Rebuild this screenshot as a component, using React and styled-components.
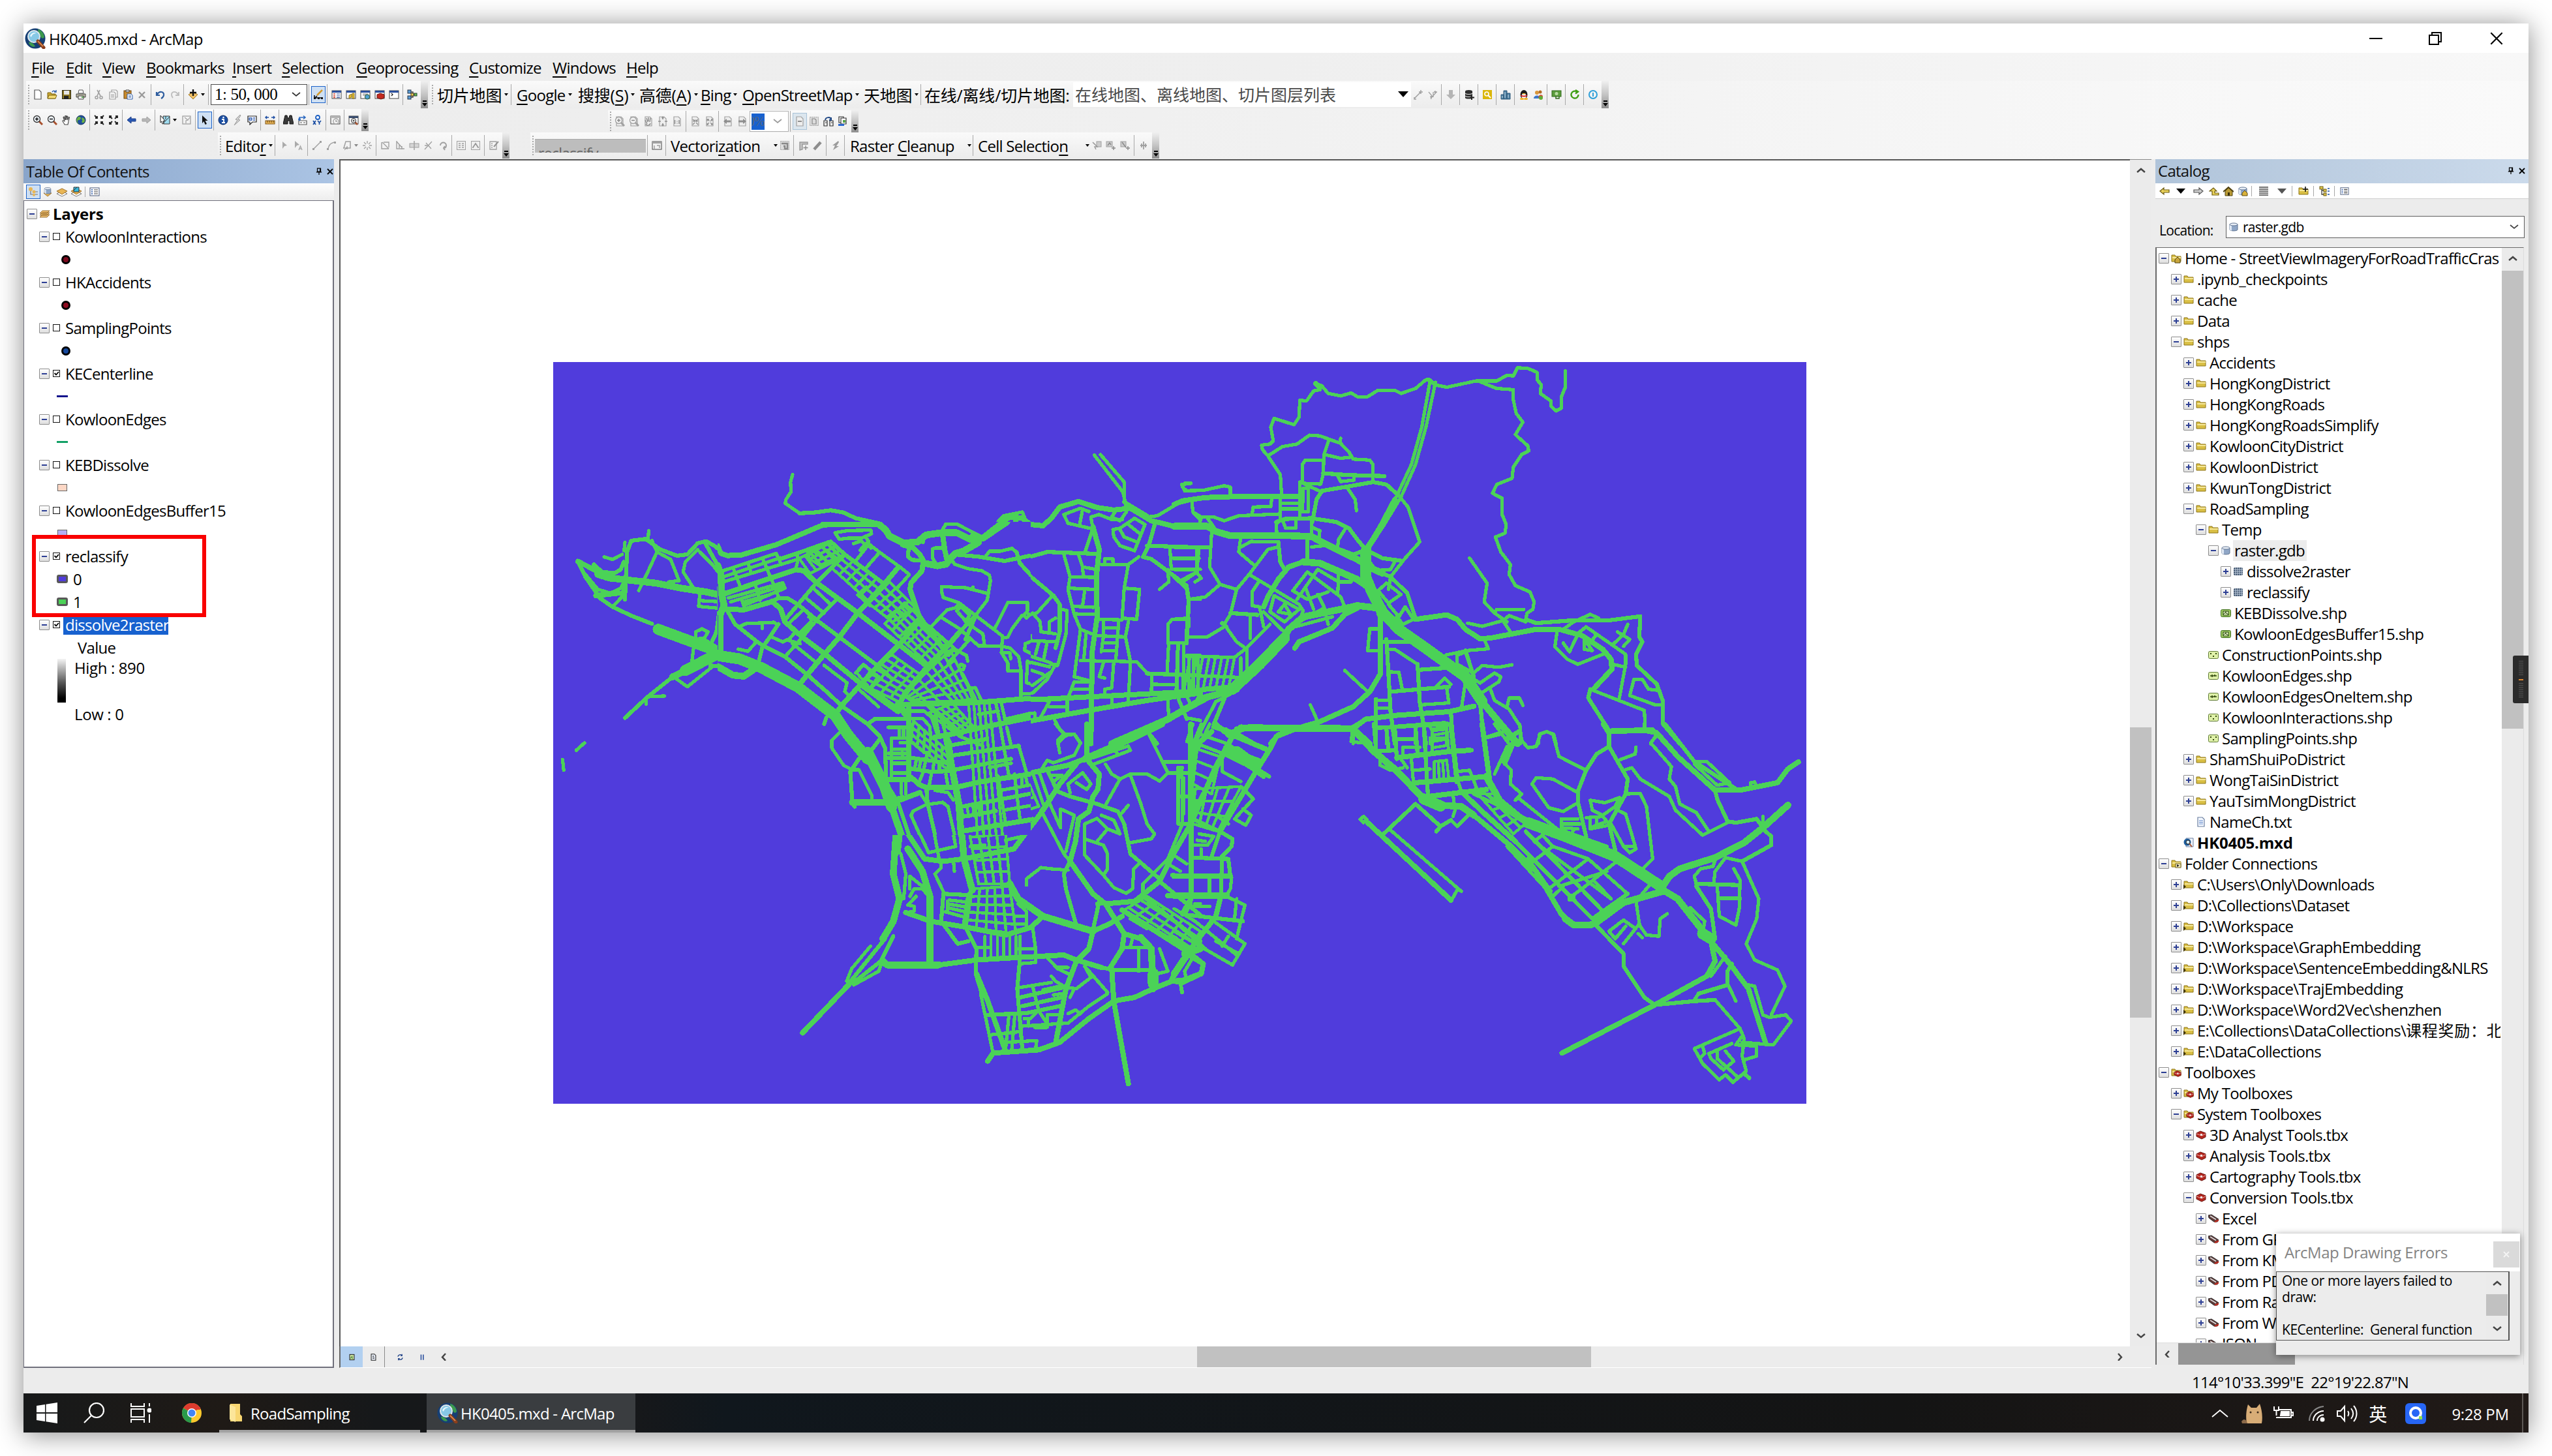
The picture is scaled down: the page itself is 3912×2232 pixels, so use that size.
import React from 'react';
import styled, { createGlobalStyle, css } from 'styled-components';

const GlobalStyle = createGlobalStyle`
  * { box-sizing: border-box; }
  body { margin: 0; background: #fff; }
  #root { width: 3912px; height: 2232px; overflow: hidden; }
`;

const sans = `"Open Sans", "Noto Sans CJK SC", sans-serif`;

/* ------------------------------------------------------------------ frame */

const Desktop = styled.div`
  width: 3912px;
  height: 2232px;
  padding: 36px;
  background: #fff;
  font-family: ${sans};
  font-size: 24px;
  letter-spacing: -0.03em;
  color: #000;
  white-space: nowrap;
`;

const Screen = styled.div`
  width: 3840px;
  height: 2160px;
  display: flex;
  flex-direction: column;
  background: #ececec;
  box-shadow: 0 3px 38px rgba(0, 0, 0, 0.46);
  position: relative;
`;

const TitleBar = styled.header`
  height: 45px;
  flex: none;
  background: #fff;
  display: flex;
  align-items: center;
  padding: 0 36px 0 2px;
`;

const TitleText = styled.span`
  margin-left: 5px;
  flex: 1;
  padding-top: 1px;
`;

const WindowButtons = styled.div`
  display: flex;
  gap: 71px;
  align-items: center;
`;

const MenuBar = styled.nav`
  height: 43px;
  flex: none;
  display: flex;
  align-items: center;
  padding-left: 12px;
  background: linear-gradient(90deg, #ececec, #efefef 50%, #f8f8f8);
`;

const MenuItem = styled.span`
  width: ${(p) => p.$w}px;
  padding-top: 1px;
  u { text-underline-offset: 4px; text-decoration-thickness: 2px; }
`;

/* --------------------------------------------------------------- toolbars */

const ToolbarArea = styled.div`
  height: 120px;
  flex: none;
  background: linear-gradient(90deg, #ececec, #f0f0f0 45%, #fafafa);
`;

const ToolbarRow = styled.div`
  display: flex;
  height: ${(p) => p.$h}px;
  padding-left: ${(p) => p.$left}px;
  align-items: flex-start;
`;

const Toolbar = styled.div`
  display: flex;
  align-items: center;
  height: ${(p) => p.$h}px;
  margin-right: ${(p) => p.$after || 0}px;
  margin-top: ${(p) => p.$top || 0}px;
  background: linear-gradient(180deg, #fafafa, #f1f1f1 60%, #ececec);
`;

const Grip = styled.i`
  width: 7px;
  height: 30px;
  flex: none;
  background: repeating-linear-gradient(180deg, #a9a9a9 0 2px, transparent 2px 4px) 3px 0 / 2px 100% no-repeat;
`;

const Sep = styled.i`
  width: 6px;
  height: 32px;
  flex: none;
  background: linear-gradient(#a8a8a8, #a8a8a8) 2px 0 / 1px 100% no-repeat;
`;

const IconCell = styled.span`
  width: ${(p) => p.$w || 22}px;
  height: 26px;
  flex: none;
  display: flex;
  align-items: center;
  justify-content: center;
  gap: 4px;
  ${(p) => p.$on && css`
    border: 1px solid ${p.$on === 'soft' ? '#a9c3d8' : '#1d63c9'};
    background: ${p.$on === 'soft' ? '#dce6ee' : '#cfe0f3'};
  `}
`;

const Caret = styled.i`
  width: 0;
  height: 0;
  flex: none;
  border: ${(p) => p.$s || 3}px solid transparent;
  border-top: ${(p) => (p.$s || 3) + 1}px solid ${(p) => p.$c || '#000'};
  border-bottom: 0;
`;

const Overflow = styled.i`
  width: 11px;
  height: 100%;
  margin-left: ${(p) => p.$gap ?? 2}px;
  flex: none;
  display: flex;
  flex-direction: column;
  align-items: center;
  justify-content: flex-end;
  gap: 2px;
  padding-bottom: 3px;
  background: linear-gradient(180deg, #f0f0f0, #c4c4c4 50%, #8e8e8e);
`;

const OverflowBar = styled.i`
  width: 6px;
  height: 2px;
  background: #000;
`;

const ToolLabel = styled.span`
  width: ${(p) => p.$w}px;
  flex: none;
  display: flex;
  align-items: center;
  justify-content: ${(p) => (p.$spread ? 'space-between' : 'flex-start')};
  gap: 4px;
  padding: 0 0 0 ${(p) => p.$pl || 0}px;
  font-size: ${(p) => (p.$cjk ? 25 : 24)}px;
  letter-spacing: ${(p) => (p.$cjk ? '-0.2px' : '-0.03em')};
  u { text-underline-offset: 4px; text-decoration-thickness: 2px; }
`;

const ScaleCombo = styled.div`
  width: 148px;
  height: 32px;
  flex: none;
  display: flex;
  align-items: center;
  justify-content: space-between;
  padding: 0 9px 0 5px;
  background: #fff;
  border: 1px solid #4b4b4b;
  font: 25px "Liberation Serif", serif;
  letter-spacing: -0.5px;
  b { font-weight: 400; letter-spacing: 5.5px; }
`;

const LayerCombo = styled.div`
  width: 518px;
  height: 38px;
  flex: none;
  display: flex;
  align-items: center;
  justify-content: space-between;
  padding: 0 4px 2px 3px;
  background: #fff;
  color: #4a4a4a;
  font-size: 25px;
  letter-spacing: 0;
`;

const PercentCombo = styled.div`
  width: 60px;
  height: 32px;
  flex: none;
  display: flex;
  align-items: center;
  justify-content: space-between;
  padding: 0 9px 0 2px;
  background: #fff;
  border: 1px solid #b3b3b3;
`;

const PercentText = styled.span`
  width: 20px;
  height: 25px;
  background: #1761cf;
  color: #55677f;
  font: 20px/25px "Liberation Serif", serif;
  overflow: hidden;
  display: flex;
  justify-content: flex-end;
`;

const RasterCombo = styled.div`
  width: 170px;
  height: 21px;
  flex: none;
  overflow: hidden;
  background: #bdbdbd;
  color: #666;
  display: flex;
  justify-content: space-between;
  padding: 0 8px 0 5px;
  font-size: 23px;
  line-height: 42px;
  border-top: 1px solid #a9a9a9;
`;

/* ------------------------------------------------------------------- body */

const Body = styled.main`
  height: 1853px;
  flex: none;
  display: flex;
`;

const DockHeader = styled.div`
  height: 37px;
  flex: none;
  display: flex;
  align-items: center;
  justify-content: space-between;
  padding: ${(p) => (p.$right ? '0 4px 2px 4px' : '2px 0 2px 4px')};
  background: ${(p) => (p.$right ? 'linear-gradient(90deg,#b0c4da,#cbdaeb)' : 'linear-gradient(90deg,#89a5ca,#abc4e4)')};
  color: #111;
`;

const DockButtons = styled.span`
  display: flex;
  gap: 6px;
`;

const TocDock = styled.aside`
  width: 476px;
  margin-right: 8px;
  flex: none;
  display: flex;
  flex-direction: column;
`;

const TocTools = styled.div`
  height: 26px;
  flex: none;
  display: flex;
  align-items: center;
  padding-left: 4px;
  background: linear-gradient(#fdfdfd, #ededed);
  & > span { height: 22px; }
  & > i { height: 16px; }
`;

const TocTree = styled.div`
  height: 1790px;
  border: 2px solid #70707c;
  border-left-width: 1px;
  border-top-width: 1px;
  background: #fff;
  padding: 2px 0 0 4px;
  position: relative;
`;

const TocRow = styled.div`
  height: 35px;
  display: flex;
  align-items: center;
  padding-left: ${(p) => p.$in || 0}px;
`;

const LayerName = styled.span`
  font-weight: ${(p) => (p.$bold ? 700 : 400)};
  letter-spacing: ${(p) => (p.$bold ? '-0.2px' : 'inherit')};
  margin-left: ${(p) => (p.$bold ? 2 : 5)}px;
  padding: 0 3px;
  height: 30px;
  line-height: 29px;
  ${(p) => p.$selected && css`
    background: #1761cf;
    color: #fff;
    width: 161px;
  `}
`;

const Expander = styled.i`
  width: 16px;
  height: 16px;
  flex: none;
  border: 1px solid #8c8c8c;
  border-radius: 1px;
  background:
    linear-gradient(#2d3f94, #2d3f94) center / 8px 2px no-repeat,
    ${(p) => (p.$plus ? 'linear-gradient(#2d3f94, #2d3f94) center / 2px 8px no-repeat,' : '')}
    linear-gradient(#fff, #dedede);
  visibility: ${(p) => (p.$hidden ? 'hidden' : 'visible')};
`;

const LayersIcon = styled.span`
  margin-left: 3px;
  display: flex;
`;

const CheckBox = styled.i`
  width: 11px;
  height: 11px;
  margin-left: 5px;
  flex: none;
  border: 1px solid #111;
  display: flex;
`;

const DotSymbol = styled.i`
  width: 14px;
  height: 14px;
  border-radius: 50%;
  border: 3px solid #000;
  background: ${(p) => p.$c};
`;

const LineSymbol = styled.i`
  width: 17px;
  height: 3px;
  background: ${(p) => p.$c};
`;

const Patch = styled.i`
  width: ${(p) => (p.$bold ? 17 : 15)}px;
  height: ${(p) => (p.$bold ? 13 : 11)}px;
  border: ${(p) => (p.$bold ? '3px solid #585858' : '1px solid #666')};
  border-radius: ${(p) => (p.$bold ? 3 : 0)}px;
  background: ${(p) => p.$c};
`;

const Ramp = styled.div`
  display: flex;
  height: 100px;
  padding-left: 47px;
  gap: 13px;
`;

const RampBar = styled.i`
  width: 13px;
  height: 67px;
  background: linear-gradient(#f4f4f4, #555 55%, #000 90%);
`;

const RampLabels = styled.div`
  display: flex;
  flex-direction: column;
  justify-content: space-between;
  line-height: 30px;
  margin-top: -1px;
  letter-spacing: -0.015em;
`;

const RedBox = styled.div`
  position: absolute;
  left: 12px;
  top: 512px;
  width: 267px;
  height: 126px;
  border: 6px solid #f90000;
`;

/* --------------------------------------------------------------- map view */

const MapColumn = styled.section`
  width: 2778px;
  margin-right: 6px;
  flex: none;
  display: flex;
  flex-direction: column;
`;

const MapRow = styled.div`
  height: 1820px;
  display: flex;
`;

const MapCanvas = styled.div`
  width: 2745px;
  flex: none;
  background: #fff;
  border-left: 2px solid #565656;
  border-top: 2px solid #565656;
  padding: 309px 0 0 326px;
  & > svg { display: block; }
`;

const VScroll = styled.div`
  width: ${(p) => p.$w}px;
  flex: none;
  display: flex;
  flex-direction: column;
  align-items: center;
  background: #ebebeb;
  border-top: ${(p) => (p.$edge ? '1px solid #8a8a8a' : '0')};
`;

const ThumbV = styled.i`
  width: 100%;
  height: ${(p) => p.$h}px;
  margin: ${(p) => p.$mt || 0}px 0 auto;
  flex: none;
  background: #c1c1c1;
`;

const ArrowSlot = styled.span`
  width: 33px;
  height: 33px;
  flex: none;
  display: flex;
  align-items: center;
  justify-content: center;
`;

const MapFooter = styled.div`
  height: 33px;
  display: flex;
  align-items: center;
  border-left: 2px solid #666;
  border-bottom: 1px solid #fff;
  background: #ececec;
`;

const ViewButton = styled.span`
  width: 34px;
  height: 32px;
  flex: none;
  display: flex;
  align-items: center;
  justify-content: center;
  margin-left: ${(p) => p.$ml || 0}px;
  background: ${(p) => (p.$on ? '#b2d0f0' : 'transparent')};
  border-right: ${(p) => (p.$line ? '1px solid #8a8a8a' : '0')};
`;

const HTrack = styled.div`
  flex: 1;
  height: 32px;
  padding-left: 1138px;
`;

const ThumbH = styled.i`
  display: block;
  width: ${(p) => p.$w}px;
  height: 100%;
  background: ${(p) => p.$c || '#c1c1c1'};
`;

/* ---------------------------------------------------------------- catalog */

const CatalogDock = styled.aside`
  width: 572px;
  flex: none;
  display: flex;
  flex-direction: column;
  position: relative;
`;

const CatalogTools = styled.div`
  height: 24px;
  flex: none;
  display: flex;
  align-items: center;
  padding-left: 3px;
  background: #fff;
  border-bottom: 1px solid #cfcfcf;
  & > i { height: 16px; }
`;

const LocationRow = styled.div`
  height: 74px;
  flex: none;
  display: flex;
  padding: 26px 6px 0;
  font-size: 21px;
`;

const LocationLabel = styled.span`
  width: 102px;
  padding-top: 7px;
  line-height: 30px;
`;

const LocationCombo = styled.div`
  width: 458px;
  height: 34px;
  display: flex;
  align-items: center;
  gap: 6px;
  padding: 0 8px 0 3px;
  border: 1px solid #5e5e5e;
  background: #fff;
  & > span { flex: 1; }
`;

const CatalogBox = styled.div`
  width: 565px;
  height: 1713px;
  border-left: 2px solid #6a6a6a;
  border-top: 1px solid #6a6a6a;
  border-right: 1px solid #ddd;
  background: #fff;
  display: flex;
  flex-direction: column;
`;

const CatalogScroller = styled.div`
  height: 1679px;
  flex: none;
  display: flex;
`;

const CatalogTree = styled.div`
  width: 527px;
  margin-right: 2px;
  height: 1679px;
  overflow: hidden;
  padding: 0 0 0 3px;
  border-bottom: 1px solid #ddd;
`;

const CatRow = styled.div`
  height: 32px;
  display: flex;
  align-items: center;
  gap: 3px;
  padding-left: ${(p) => p.$lv * 19}px;
`;

const CatName = styled.span`
  padding: 2px 3px 0 2px;
  height: 32px;
  line-height: 28px;
  font-weight: ${(p) => (p.$bold ? 700 : 400)};
  letter-spacing: ${(p) => (p.$bold ? '-0.2px' : 'inherit')};
  background: ${(p) => (p.$hot ? '#ececec' : 'transparent')};
`;

const Hanzi = styled.span`
  letter-spacing: 0.7px;
`;

const CatalogHScroll = styled.div`
  height: 33px;
  display: flex;
  background: #ebebeb;
`;

const SideTab = styled.div`
  position: absolute;
  right: 0;
  top: 761px;
  width: 24px;
  height: 73px;
  border-radius: 3px 0 0 3px;
  background: #2b2b2b;
  display: flex;
  flex-direction: column;
  justify-content: center;
  align-items: center;
`;

const TabLine = styled.i`
  width: 7px;
  height: ${(p) => (p.$hot ? 2 : 24)}px;
  margin: 2px 0;
  background: ${(p) => (p.$hot ? '#e0862f' : 'repeating-linear-gradient(#555 0 1px, #2b2b2b 1px 3px)')};
`;

const ErrorPopup = styled.div`
  position: absolute;
  left: 185px;
  top: 1647px;
  width: 374px;
  height: 186px;
  background: #ececec;
  box-shadow: 0 2px 10px rgba(0, 0, 0, 0.45);
`;

const ErrorTitle = styled.div`
  height: 58px;
  padding: 12px 1px 6px 13px;
  display: flex;
  justify-content: space-between;
  align-items: center;
  background: #fff;
  color: #848484;
  letter-spacing: -0.02em;
  line-height: 30px;
  & > span:first-child { margin-top: -7px; }
`;

const ErrorClose = styled.span`
  width: 40px;
  height: 40px;
  display: flex;
  align-items: center;
  justify-content: center;
  background: #dadada;
`;

const ErrorBox = styled.div`
  width: 358px;
  height: 106px;
  display: flex;
  border: 1px solid #555;
  border-right-width: 2px;
  padding: 1px 2px 1px 8px;
  font-size: 21px;
  line-height: 25px;
  letter-spacing: -0.022em;
`;

const ErrorText = styled.div`
  width: 313px;
  flex: none;
  white-space: pre;
`;

const StatusBar = styled.footer`
  height: 39px;
  flex: none;
  padding: 4px 0 0 3324px;
  line-height: 36px;
  white-space: pre;
  background: #ececec;
`;

/* ---------------------------------------------------------------- taskbar */

const Taskbar = styled.div`
  height: 60px;
  flex: none;
  display: flex;
  color: #fff;
  background: linear-gradient(90deg, #17191a, #1f1a16 8%, #16181a 14%, #17181a 24%, #10171d 28%, #141414 75%, #211a17);
`;

const TaskIcon = styled.span`
  width: ${(p) => p.$w}px;
  display: flex;
  align-items: center;
  justify-content: center;
`;

const TaskButton = styled.div`
  width: ${(p) => p.$w}px;
  margin-right: 10px;
  display: flex;
  align-items: center;
  gap: ${(p) => p.$gap}px;
  padding: 4px 0 0 ${(p) => p.$pl}px;
  border-bottom: 4px solid #a2a2a2;
  background: ${(p) => (p.$active ? '#3a3d40' : 'transparent')};
`;

const Tray = styled.div`
  margin-left: auto;
  display: flex;
  align-items: center;
  height: 60px;
`;

const TrayCell = styled.span`
  width: ${(p) => p.$w}px;
  padding-top: 2px;
  display: flex;
  justify-content: center;
  align-items: center;
  font-size: ${(p) => (p.$big ? 28 : 24)}px;
  letter-spacing: -0.015em;
`;

const ShowDesktop = styled.i`
  width: 10px;
  height: 60px;
  border-left: 2px solid #5d5855;
`;

/* ------------------------------------------------------------------ icons */

const G = '#a0a0a0';
const L = (d, c = '#222', w = 1.5, f = 'none') => <path d={d} stroke={c} strokeWidth={w} fill={f} />;
const page = (c = '#555', f = '#fff') => L('M3 1h7l3 3v11H3z', c, 1.2, f);
const win = (c = '#2b4f9c', f = '#fff') => (
  <g><rect x="1" y="2" width="14" height="12" fill={f} stroke="#444" /><rect x="1" y="2" width="14" height="3" fill={c} /></g>
);
const lens = (c, f, sign) => (
  <g>{L('M9.5 9.5L15 15', c === G ? G : '#a8512e', 3)}<circle cx="6.5" cy="6.5" r="5" fill={f} stroke={c} strokeWidth="1.3" />{L(sign, c === G ? '#888' : '#111', 1.5)}</g>
);
const folder = (c = '#d9bf45') => (
  <g><path d="M1 3h5l1 2h8v8H1z" fill={c} stroke="#8d7416" strokeWidth="1" /><path d="M2 7h13" stroke="#fff6b8" strokeWidth="1.5" /></g>
);
const toolbox = (
  <g><path d="M1 5l6-3 8 3v6l-6 3-8-4z" fill="#b3261e" stroke="#6b1712" /><path d="M1 6l8 3 6-3" stroke="#f3b2aa" fill="none" /><path d="M7 6h3v3H7z" fill="#efefef" /></g>
);
const cyl = (
  <g><path d="M2 4v8c0 2.5 12 2.5 12 0V4" fill="#8fa6c6" stroke="#5f7390" /><path d="M2 4v8c0 1 2 1.5 3 1.7V4z" fill="#dfe8f4" /><ellipse cx="8" cy="4" rx="6" ry="2" fill="#e9eff7" stroke="#5f7390" /></g>
);
const poly = (
  <g><rect x=".5" y="2.5" width="15" height="11" rx="2" fill="#9fca63" stroke="#3c6b1d" /><rect x="4" y="5" width="8" height="6" fill="#dff0bd" stroke="#24420f" />{L('M4 10l3-3 5 3M8 5v3', '#24420f', 1)}</g>
);
const layerIcon = (f = '#e9b655') => (
  <g><path d="M0 11l8 4 8-4-8-4z" fill="#fff" stroke="#777" /><path d="M0 7l8 5 8-5-8-4z" fill={f} stroke="#a0722a" /></g>
);

const ICONS = {
  new: page(),
  open: <g><path d="M1 5h5l1 2h6v7H1z" fill="#c9a52f" stroke="#7d6412" /><path d="M3 9h12l-2 5H1z" fill="#f5dc74" stroke="#7d6412" />{L('M8 4c2-3 4-2 5 0M11 4h3V1', '#2456a5', 1.4)}</g>,
  save: <g><rect x="1.5" y="1.5" width="13" height="13" fill="#8a7420" stroke="#2e2a12" /><rect x="4" y="2" width="8" height="6" fill="#e6e6e6" /><rect x="4" y="10" width="7" height="5" fill="#222" /></g>,
  print: <g><path d="M5 1h6l1 5H4z" fill="#fff" stroke="#555" /><path d="M1 7h14v5H1z" fill="#b9b6a4" stroke="#444" /><path d="M4 10h8v5H4z" fill="#eee" stroke="#444" />{L('M9 12h3', '#3a9c2d', 1.5)}</g>,
  cut: <g>{L('M5 1l5 9M9 1L5 10', G, 1.6)}<circle cx="4" cy="12.5" r="2" fill="none" stroke={G} strokeWidth="1.5" /><circle cx="11" cy="12.5" r="2" fill="none" stroke={G} strokeWidth="1.5" /></g>,
  copy: <g>{L('M5 1h7l2 2v9H5z', G, 1.2, '#f6f6f6')}{L('M2 4h7l2 2v9H2z', G, 1.2, '#f6f6f6')}{L('M4 8h5M4 10h5M4 12h5', G, 1)}</g>,
  paste: <g><rect x="2" y="2" width="11" height="12" fill="#c98b2c" stroke="#6e4611" /><path d="M5 1h5v3H5z" fill="#ddd" stroke="#444" /><path d="M7 7h6l2 2v6H7z" fill="#fff" stroke="#2a5aa8" />{L('M9 10h4M9 12h4', '#2a5aa8', 1)}</g>,
  del: L('M3 4l9 9M12 4l-9 9', '#9a9a9a', 2.4),
  undo: L('M2 4v5h5M3 8c3-6 11-5 10 1-.4 2-2 4-4 5', '#2d5c9e', 2.2),
  redo: L('M14 4v5H9M13 8C10 2 3 3 3 8c0 2 1 4 2 5', '#bcbcbc', 1.8),
  add: <g><path d="M8 15L1 8l7-4 7 4z" fill="#efc067" stroke="#a37a26" />{L('M8 0v10M3 5h10', '#111', 2.4)}</g>,
  edit: <g>{L('M2 13h11M2 9v4M6 10l-3 3', '#111', 1.6)}{L('M6 9L14 1', '#d49a2a', 2.5)}<path d="M1 12h3v3H1zM7 12h3v3H7zM12 12h3v3h-3z" fill="#111" /></g>,
  toc: <g>{win()}{L('M3 7h3M3 10h3M3 12.5h3', '#cf3c2b', 1.5)}{L('M8 7h5M8 10h5M8 12.5h5', '#2b4f9c', 1.2)}</g>,
  catalog: <g>{win()}<path d="M5 9l4-2v5l-4 2zM10 6h3v8h-3z" fill="#e5bd2f" stroke="#7d6412" strokeWidth=".8" /></g>,
  search: <g>{win()}{L('M4 7h8M4 9h6', '#777', 1)}<circle cx="11" cy="11.5" r="3.6" fill="#4f9fd1" stroke="#29592a" /></g>,
  toolbox: <g>{win()}<path d="M4 8l5-2 6 2v5l-5 2-6-2z" fill="#c42a20" stroke="#6b1712" /></g>,
  python: <g>{win('#2b4f9c')}{L('M4 6l2 2-2 2', '#111', 1.2)}</g>,
  model: <g>{L('M4 4h5v8H4M9 8h4', '#444', 1.4)}<rect x="1" y="1" width="5" height="5" fill="#5b9bd5" stroke="#234" /><rect x="1" y="10" width="5" height="5" fill="#5b9bd5" stroke="#234" /><rect x="6" y="6" width="4" height="4" fill="#f3d44e" stroke="#432" /><rect x="11" y="6" width="4" height="4" fill="#66b84a" stroke="#243" /></g>,
  zin: lens('#333', '#eef4fa', 'M4 6.5h5M6.5 4v5'),
  zout: lens('#333', '#eef4fa', 'M4 6.5h5'),
  hand: L('M5 15c-1-3-4-5-3-6s2 1 3 1L3 4l1-1 2 5V1.500h1.300V8l1.200-6 1.200.3L9.300 8l2.200-4.500 1 .5-1.500 5.500c0 3-1 4-1 5.500z', '#444', 1.1, '#fff'),
  globe: <g><circle cx="8" cy="8" r="7" fill="#1f4f9e" stroke="#14305e" /><path d="M4 3c4 0 5 2 3 4s-3 0-4 2 2 4 1 5c-3-3-4-7 0-11zM10 4c3 1 4 3 4 5s-2 4-4 3 1-3 0-4-1-2 0-4z" fill="#6cb344" /></g>,
  fin: L('M1 1l4 4M5 2v3H2M15 1l-4 4M11 2v3h3M1 15l4-4M2 11h3v3M15 15l-4-4M14 11h-3v3', '#222', 1.8),
  fout: L('M2 2l4 4M2 5V2h3M14 2l-4 4M14 5V2h-3M2 14l4-4M2 11v3h3M14 14l-4-4M14 11v3h-3', '#222', 1.8),
  back: L('M1 8l6-5v3h7v4H7v3z', '#1a3c88', 1, '#2958b4'),
  fwd: L('M15 8L9 3v3H2v4h7v3z', '#9d9d9d', 1, '#b8b8b8'),
  selfeat: <g><path d="M5 2h10v12H6z" fill="#9fdcf0" stroke="#333" />{L('M6 12L15 3M9 2v5', '#333', 1)}<path d="M1 1l7 8-3 .500 1 4-2 .500-1-4-2 2z" fill="#fff" stroke="#222" /></g>,
  clear: <g><rect x="2" y="2" width="12" height="12" fill="none" stroke={G} strokeWidth="1.300" />{L('M5 4l5 4-3 1v4M10 8l3-4', G, 1.2)}</g>,
  arrow: <path d="M4 1l8.500 8H8.500l2.500 5-2.500 1-2-5-2.500 3z" fill="#111" />,
  info: <g><circle cx="8" cy="8" r="7" fill="#1c4fa3" stroke="#0c2e6b" />{L('M6 7h3v5M6 12h5', '#fff', 1.8)}<circle cx="8.500" cy="4" r="1.300" fill="#fff" /></g>,
  bolt: <path d="M12 0L5 7l3 1-5 8 9-8-3-1 4-6z" fill="#d4d4d4" stroke="#999" />,
  html: <g>{L('M2 2h13v9H9l-4 4v-4H2z', '#222', 1.2, '#fff')}{L('M4 5h4v3H4zM10 5h3M10 8h3', '#2b57ad', 1.3)}</g>,
  measure: <g>{L('M1 4h5M10 4h5M3 2L1 4l2 2M13 2l2 2-2 2', '#1d4da3', 1.5)}<rect x="1" y="9" width="14" height="5" fill="#edb95b" stroke="#7c5312" />{L('M4 9v3M7 9v3M10 9v3M13 9v3', '#5a3b07', 1)}</g>,
  find: <path d="M3 1h3l1 4h2l1-4h3l3 13h-6V9H7v5H0z" fill="#3b3b3b" stroke="#111" />,
  route: <g>{L('M2 9h12v6H2zM4 12h3M9 12h3', '#555', 1.2, '#fff')}{L('M3 7V4h8M9 1.500L12 4 9 6.500', '#2b68c0', 1.6)}<circle cx="3" cy="7" r="2" fill="#2b68c0" /></g>,
  xy: <g><circle cx="9" cy="4" r="3" fill="#fff" stroke="#1c5fc1" strokeWidth="1.800" />{L('M2 9l4 6M6 9l-4 6M9 9l2.500 3L14 9M11.500 12v3', '#1c4fa3', 1.7)}</g>,
  time: <g>{win('#b5b5b5', '#f2f2f2')}<circle cx="9" cy="10" r="4" fill="#f4f4f4" stroke={G} strokeWidth="1.300" />{L('M9 8v2h2', G)}</g>,
  viewer: <g>{win('#3a4d6e')}{L('M10 11l4 4', '#a8512e', 2.5)}<circle cx="8" cy="9" r="3.500" fill="#fff" stroke="#222" />{L('M6.500 9h3M8 7.500v3', '#222', 1)}</g>,
  lzin: <g>{page(G, '#eee')}{lens(G, '#f3f3f3', 'M4 6.500h5M6.500 4v5')}</g>,
  lzout: <g>{page(G, '#eee')}{lens(G, '#f3f3f3', 'M4 6.500h5')}</g>,
  lhand: <g>{page(G, '#eee')}{L('M3 6l3 6M5 3l2 6M8 2v6M11 3l-1 6M4 12c1 3 6 3 7-1', '#8e8e8e', 1.5)}</g>,
  lfull: <g>{page(G, '#eee')}{L('M8 1v4M8 11v4M1 8h4M11 8h4M6.500 3L8 1.500 9.500 3M6.500 13L8 14.500 9.500 13', '#8e8e8e', 1.6)}</g>,
  l11: <g>{page(G, '#eee')}{L('M4.500 6v6M8 7.500v1M8 10.500v1M11 6v6', '#8e8e8e', 1.5)}</g>,
  lfin: <g>{page(G, '#eee')}{L('M4 5l3 3M7 5.500V8H4.500M12 5L9 8M9 5.500V8h2.500M4 13l3-3M12 13l-3-3', '#8e8e8e', 1.4)}</g>,
  lfout: <g>{page(G, '#eee')}{L('M4.500 5.500l3 2M4 7.500V5h3M12 5L9 8M4 13l3-3M12 13l-3-3M10 5h2v2M4 11v2h2M12 11v2h-2', '#8e8e8e', 1.4)}</g>,
  lback: <g>{page(G, '#eee')}<path d="M1 8l5-4v2.500h6v3H6V12z" fill="#8e8e8e" /></g>,
  lfwd: <g>{page(G, '#eee')}<path d="M14 8L9 4v2.500H2v3h7V12z" fill="#8e8e8e" /></g>,
  ldraft: <g>{page(G, '#eee')}{L('M5 8h6', '#777', 1.6)}</g>,
  lfocus: <g><rect x="1.500" y="1.500" width="13" height="13" fill="#ddd" stroke={G} strokeDasharray="2 1" />{L('M5 4h4l2 2v6H5z', '#888', 1.2)}</g>,
  lswap: <g>{L('M1 7h5v8H1zM10 7h5v8h-5zM3 10h2M12 10h2', '#333', 1.2, '#eee')}{L('M3 6c1-5 8-5 9-1M12 2v4H9', '#1d4684', 2)}</g>,
  lpages: <g>{L('M2 1h7v9H2z', '#333', 1.200, '#fff')}{L('M5 3h8v9H5z', '#333', 1.200, '#fff')}<rect x="8" y="6" width="4" height="4" fill="#5aa54b" />{L('M1 13.500h9', '#2b68d0', 3)}</g>,
  eptr: <path d="M5 2l7 6-4 1-3 4z" fill="#aaa" />,
  eptra: <g><path d="M2 1l7 6-4 1-3 4z" fill="#aaa" />{L('M8 15l2.500-6L13 15M9 13h3', '#aaa', 1.4)}</g>,
  eline: <g>{L('M3 13L13 3', G)}<path d="M1 12h3v3H1zM12 1h3v3h-3z" fill={G} /></g>,
  ecurve: <g>{L('M3 13c1-6 4-9 10-10', G)}<path d="M1 12h3v3H1zM12 2h3v3h-3z" fill={G} /></g>,
  etrace: <g>{L('M4 12L7 2h7v10H3', G)}{L('M5 15l4-4M9 14V9', '#888', 1)}</g>,
  epoint: L('M8 1v4M8 11v4M1 8h4M11 8h4M3 3l3 3M13 3l-3 3M3 13l3-3M13 13l-3-3', G, 1.300),
  evert: <g>{L('M2 3v10h11M3 3l10 10M5 3h8v8', G, 1.400)}</g>,
  eshape: L('M3 1v12h12M3 2l8 9M7 6v6M11 9v5', G, 1.4),
  esplit: <g><rect x="1" y="5" width="14" height="6" fill="#d5d5d5" stroke={G} />{L('M8 1v14', G)}</g>,
  ecut: L('M2 14L13 2M4 4l8 9M2 8h4', G, 1.300),
  erot: L('M4 8c0-6 9-6 9 0 0 3-2 4-4 4M11 9l-2 3 2 3', '#a0a0a0', 2),
  etable: <g><rect x="1.500" y="1.500" width="13" height="13" fill="#efefef" stroke={G} />{L('M4 5h3M4 8h3M4 11h3M9 5h3M9 8h3M9 11h3', G, 1.400)}</g>,
  esketch: <g><rect x="1.500" y="1.500" width="13" height="13" fill="#efefef" stroke={G} />{L('M4 11l4-6 4 6M4 12v-2M12 12v-2', '#949494', 1.600)}</g>,
  ecreate: <g>{L('M2 2h10v12H2zM4 5h2M4 8h2M4 11h2', G, 1.300)}{L('M8 10l7-8', '#949494', 2)}</g>,
  rtable: <g>{win(G, '#f2f2f2')}{L('M8 8h4v4M4 8v5', G)}</g>,
  vtrace: <g><rect x="1.500" y="1.500" width="13" height="13" fill="#ddd" stroke={G} strokeDasharray="2 1" />{L('M3 5h9v8H8V9H6', '#888', 2.400)}</g>,
  vcorner: <g>{L('M3 15V3h12v3H7v8z', '#999', 1.4, '#c4c4c4')}{L('M12 8v7M8.500 11.500h7', '#888', 1.300)}</g>,
  vpen: L('M3 14L13 3', '#8d8d8d', 4.500),
  vflash: <path d="M12 1L3 8h4l-3 7 9-6h-4l4-6z" fill="#9b9b9b" />,
  cs1: <g><rect x="8" y="2" width="7" height="8" fill="#ccc" stroke={G} />{L('M2 3l7 7H5l2 4', '#999', 1.500)}</g>,
  cs2: <g><rect x="1" y="2" width="9" height="8" fill="#ccc" stroke={G} />{L('M12 9v6M9 12h6M3 8l3-4 2 3', '#888', 1.400)}</g>,
  cs3: <g><rect x="1" y="2" width="8" height="8" fill="#ccc" stroke={G} />{L('M3 3l6 8M12 9v6M9 12h6', '#888', 1.400)}</g>,
  snap: L('M8 2v12M3 8h10M5 5v6M11 5v6', '#a0a0a0', 1.800),
  gline: L('M2 14L12 4M12 1v6M9 4h6M2 12v3h3', G, 1.500),
  gsel: L('M2 4l6 7H5l1 4M9 4v8M6 13l8-9M12 2v4M10 4h5', G, 1.300),
  gdown: <path d="M5 1h6v7h4l-7 7-7-7h4z" fill="#b5b5b5" />,
  db: <g><path d="M2 3v10c0 2 11 2 11 0V3" fill="#2c2c2c" /><ellipse cx="7.500" cy="3" rx="5.500" ry="2" fill="#2c2c2c" />{L('M2 6c1 2 10 2 11 0M2 10c1 2 10 2 11 0', '#fff', 1)}{L('M12 9v7M9 12.500h7', '#222', 2)}</g>,
  yzoom: <g><rect x="1" y="1" width="14" height="14" fill="#dbb70b" /><circle cx="7" cy="7" r="3" fill="none" stroke="#fff" strokeWidth="1.600" />{L('M9 9l4 4', '#fff', 2)}</g>,
  city: <g><path d="M1 8h4v7H1zM5 2h5v13H5zM10 6h5v9h-5z" fill="#4c7ea0" stroke="#2e5a7a" />{L('M7 4v9M12 8v5M3 10v3', '#cfe3ef', 1)}</g>,
  qq: <g><ellipse cx="8" cy="8" rx="5.500" ry="7" fill="#1b1b1b" /><ellipse cx="8" cy="10.500" rx="3.500" ry="4" fill="#fff" /><path d="M3 8c3 2 7 2 10 0v2c-3 2-7 2-10 0z" fill="#d32020" /><path d="M5 6h6l-3 2z" fill="#f0b020" /><ellipse cx="5" cy="14.500" rx="3" ry="1.500" fill="#f0b020" /><ellipse cx="11" cy="14.500" rx="3" ry="1.500" fill="#f0b020" /></g>,
  users: <g><circle cx="6" cy="5" r="3" fill="#d9963a" /><path d="M1 14c0-6 10-6 10 0z" fill="#3a77c9" /><circle cx="11" cy="4" r="2.500" fill="#b36b24" /><path d="M8 13c0-6 7-6 7-2v3z" fill="#d34a32" /><circle cx="12" cy="13" r="3" fill="#5fae35" /></g>,
  money: <g><rect x="1" y="2" width="14" height="9" fill="#5b9c3c" stroke="#33691e" /><circle cx="8" cy="6.500" r="2.500" fill="#b9dba3" />{L('M7 11v3h5v-3', '#33691e')}</g>,
  refresh: L('M11 3.500A5.500 5.500 0 1 0 13.500 8M9 1l4 2.500-4 3', '#3f9e14', 2.400),
  about: <g><circle cx="8" cy="8" r="6" fill="none" stroke="#2d9fd8" strokeWidth="2" />{L('M8 5v6', '#2d9fd8', 2)}</g>,
  tocorder: <g>{L('M4 5v7h5M10 12h5M11 8h4', '#777', 1.200)}<circle cx="4" cy="4" r="3" fill="#e9b655" /><circle cx="9" cy="8" r="2.500" fill="#e9b655" /><circle cx="9" cy="13" r="2" fill="#e9b655" /></g>,
  tocsource: <g><path d="M2 10l6 5 6-5z" fill="#e9b655" stroke="#a0722a" /><g transform="translate(1.600 0) scale(.8)">{cyl}</g></g>,
  tocvis: layerIcon(),
  tocsel: <g>{layerIcon()}<path d="M4 1h8v7H4z" fill="#35b8dc" stroke="#333" />{L('M4 6l5-5', '#333', 1)}</g>,
  options: <g><rect x="1" y="2" width="14" height="12" fill="#fff" stroke="#48597a" />{L('M7 5h6M7 8h6M7 11h6', '#444', 1.200)}{L('M3 5h2M3 8h2M3 11h2', '#1d4da3', 1.600)}</g>,
  cback: L('M1 8l6-5v3h8v4H7v3z', '#6b5a10', 1.2, '#ead25a'),
  cfwd: L('M15 8L9 3v3H1v4h8v3z', '#555', 1.2, '#ccc'),
  cup: L('M1 8l6-5 5 5H9v3h6v3H5V8z', '#6b5a10', 1.2, '#ead25a'),
  chome: <g><path d="M3 8v7h11V8L8 3z" fill="#b99a35" stroke="#4f4212" />{L('M0 9l8-7 8 7', '#4f4212', 2)}<path d="M7 10h3v5H7z" fill="#3b3009" /></g>,
  cdefault: <g>{cyl}<path d="M7 15v-4l4-4 4 4v4z" fill="#d9b23a" stroke="#5e4a11" /></g>,
  cgrid: L('M1 2h14M1 5h14M1 8h14M1 11h14M1 14h14', '#444', 1.400),
  cconnect: <g>{folder()}{L('M11 1v8M7 5h8', '#111', 1.600)}</g>,
  ctree: <g>{L('M4 4v9h5M4 7h5', '#444', 1.300)}<rect x="1" y="1" width="5" height="4" fill="#e2c94f" stroke="#6b5a10" /><rect x="7" y="5" width="4" height="4" fill="#e2c94f" stroke="#6b5a10" /><rect x="7" y="11" width="4" height="4" fill="#e2c94f" stroke="#6b5a10" />{L('M13 4h3M13 8h3M13 13h3', '#1d4da3', 1.500)}</g>,
  folder: folder(),
  home: <g>{folder()}<path d="M6 15v-5l4-4 4 4v5z" fill="#c8a53d" stroke="#4f4212" /></g>,
  fconn: <g>{folder()}<rect x="7" y="8" width="8" height="6" fill="#f7f1ca" stroke="#6b5a10" /><path d="M9 9l4 2-4 2z" fill="#222" /></g>,
  flink: <g>{folder()}<path d="M0 8l4 3-4 4z" fill="#3d330a" /></g>,
  ftool: <g>{folder()}<g transform="translate(4 4) scale(.75)">{toolbox}</g></g>,
  tbx: toolbox,
  toolset: <g><path d="M0 3l5-1 11 7-2 4-5 0L1 7z" fill="#5e3a38" stroke="#2c2c2c" />{L('M3 4l9 5.500', '#ddd', 1.500)}{L('M10 13l6-2.500', '#c32b20', 2.200)}</g>,
  gdb: cyl,
  raster: <g><rect x="1" y="2" width="14" height="12" rx="2" fill="#2f4560" />{L('M1 5h14M1 8h14M1 11h14M4 2v12M7 2v12M10 2v12M13 2v12', '#c7d3e2', 1)}</g>,
  poly,
  point: <g><rect x=".5" y="2.500" width="15" height="11" rx="2" fill="#def0a8" stroke="#5f7a35" /><path d="M3 5h2v2H3zM7 9h2v2H7zM11 5h2v2h-2z" fill="#33480f" /></g>,
  line: <g><rect x=".5" y="2.500" width="15" height="11" rx="2" fill="#def0a8" stroke="#5f7a35" />{L('M3 8h10M6 6v4M10 6v3', '#33480f', 1.500)}</g>,
  txt: <g>{page('#6b7fa0', '#f4f8ff')}{L('M5 6h6M5 8.500h6M5 11h6', '#5e86c7', 1.200)}</g>,
  mxd: <g><path d="M4 1h11v13H4z" fill="#eef3fa" stroke="#6b7fa0" /><circle cx="6" cy="7" r="5.500" fill="#1f5f9e" /><circle cx="7" cy="7" r="3" fill="#d3ebf7" stroke="#222" />{L('M9 9l4 5', '#a8512e', 2)}</g>,
  layers: <g><path d="M1 13l4-4h11l-4 4zM1 10l4-4h11l-4 4zM1 7l4-4h11l-4 4z" fill="#f0c274" stroke="#8d6321" strokeWidth=".9" /></g>,
  vdata: <g><rect x="3" y="2" width="10" height="12" fill="#cfe4a3" stroke="#222" strokeWidth="1.500" />{L('M5 11l4-6M9 8v4', '#3b7a2d', 1.600)}</g>,
  vlayout: <g><path d="M3 1h7l3 3v11H3z" fill="#e8eef8" stroke="#222" strokeWidth="1.500" />{L('M6 6h3M6 10h4', '#222', 2)}</g>,
  vrefresh: L('M3 7c0-5 8-6 9-2M12 1v4H9M13 9c0 5-8 6-9 2M4 15v-4h3', '#1d3f85', 1.800),
  vpause: L('M5 2v12M10 2v12', '#22489a', 2.200),
};

const IconSvg = styled.svg`
  flex: none;
`;

const Icon = ({ name, size = 16 }) => (
  <IconSvg width={size} height={size} viewBox="0 0 16 16">{ICONS[name]}</IconSvg>
);

const ArcMapLogo = ({ size = 32 }) => (
  <IconSvg width={size} height={size} viewBox="0 0 32 32">
    <circle cx="16" cy="16" r="15.500" fill="#163f74" />
    <path d="M20 2c6 1 10 7 10 12-2 3-5 2-6-2s-4-5-4-10zM6 22c3-1 8 2 10 6-4 2-9-1-10-6z" fill="#3c9a4e" />
    <circle cx="14" cy="13" r="9" fill="#86c8e6" stroke="#dfe7ec" strokeWidth="2" />
    <path d="M8 12c2-5 7-6 10-4-4 0-7 2-8 6z" fill="#e9f7fd" />
    <path d="M20 20l9 10" stroke="#8a3e1c" strokeWidth="5" strokeLinecap="round" />
    <path d="M20 20l8 8" stroke="#e39a5c" strokeWidth="1.500" />
  </IconSvg>
);

const Chevron = ({ dir = 'down', w = 14, c = '#444', s = 2.500 }) => {
  const d = { up: 'M1 8l6-5 6 5', down: 'M1 3l6 5 6-5', left: 'M9 1L4 6.500l5 5.500', right: 'M5 1l5 5.500L5 12' }[dir];
  return <svg width={w} height={w * 0.85} viewBox="0 0 14 12"><path d={d} fill="none" stroke={c} strokeWidth={s} /></svg>;
};

const Pin = () => (
  <svg width="10" height="12" viewBox="0 0 12 14"><path d="M3 1h6v6H3zM1 8h10M6 8v5M8 1v6" stroke="#000" strokeWidth="1.500" fill="none" /></svg>
);
const Cross = ({ c = '#000', s = 1.8, w = 12 }) => (
  <svg width={w} height={w} viewBox="0 0 12 12"><path d="M2 2l8 8M10 2l-8 8" stroke={c} strokeWidth={s} /></svg>
);

/* -------------------------------------------------------------------- map */

const lerp = (a, b, t) => [a[0] + (b[0] - a[0]) * t, a[1] + (b[1] - a[1]) * t];

// Street grid inside a quadrilateral: nu + 1 streets one way, nv + 1 the other.
const mesh = ([x0, y0, x1, y1, x2, y2, x3, y3, nu, nv]) => {
  const a = [x0, y0], b = [x1, y1], c = [x2, y2], d = [x3, y3];
  let out = '';
  for (let i = 0; i <= nu; i += 1) out += `M${lerp(a, b, i / nu)} ${lerp(d, c, i / nu)}`;
  for (let j = 0; j <= nv && nv > 0; j += 1) out += `M${lerp(a, d, j / nv)} ${lerp(b, c, j / nv)}`;
  return out;
};

const TILES = [
  {
    x: -8, y: -15,
    minor: 'M588,490 583,520 584,560 572,590 570,605 605,645 M242,715 241,745M85,880 120,950 150,965 175,945 185,910M135,820 155,830 178,810M185,762 183,795M185,910 178,980 155,1020M250,755 262,800 295,830 315,915 290,920M262,800 240,880 218,955M360,790 330,840 325,880 350,945M365,800 395,850 418,900M365,970 362,1018 425,1028M365,995 420,1000M415,1030 418,1190M240,1380 280,1377M235,1385 236,1410M310,1310 335,1340 395,1260M350,1185 345,1250M415,1190 370,1145 355,1150 355,1120 370,1108 385,1120 375,1148M1085,690 1095,655 1140,640 1150,680M1215,975 1210,980M1165,1045 1183,1080 1185,1120 1220,1128M1220,1065 1205,1080 1205,1125M1235,1030 1248,1035 1245,1130 1225,1255 1210,1250M1160,1135 1160,1155 1145,1180 1155,1215 1210,1245M1160,1155 1220,1160M1180,1160 1172,1210M1200,1160 1192,1225M1155,1235 1150,1335 1165,1335 1205,1285M1220,1250 1200,1310 1165,1365 1140,1370M1155,1240 1205,1260M1155,1270 1190,1290M1145,1050 1175,1045 1210,980M1145,1050 1150,1065 1165,1045M1095,655 1045,745M1313,412 1382,560 1390,620M1328,410 1385,520 1385,600M1240,650 1280,625 1300,638M1240,650 1250,685 1310,708M1285,630 1278,690M1365,635 1355,660 1375,675 1390,640M1310,708 1305,660 1325,650 1355,670 1380,670M1310,705 1292,795M1410,665 1435,690 1410,795 1375,775 1360,740 1358,710 1375,705 1410,665M1375,710 1385,740 1415,760M1395,690 1425,730M1420,820 1395,850 1385,945 1380,1065 1415,1070 1422,950 1385,945M1330,850H1395M1338,840V828H1358V840M1440,660 1465,655 1515,605 1568,585M1548,600 1550,640 1568,670M1568,552 1535,555 1525,540 1530,525 1545,525M1490,870 1492,920 1470,950M1530,915 1560,880M1495,785 1498,868 1568,870M1498,825 1565,825M1565,780 1560,870M1240,810 1255,900 1250,950 1265,1050 1280,1110 1310,1130M1275,810 1285,860 1318,870M1285,870 1288,900M1255,900 1318,902M1252,945 1315,950M1290,955 1285,1015M1265,1018 1312,1022M1268,1048 1316,1050M1320,1070 1380,1072M1315,1135 1385,1140M1372,1075 1365,1230M1335,1075V1130M1340,1105H1370M1335,1140 1330,1200M1335,1165h30M1330,1195h35M1395,1080 1388,1140 1400,1240 1395,1395M1280,1235 1415,1240 1440,1285M1280,1110 1270,1235 1265,1300 1300,1315M1293,1130 1288,1230M1265,1322h40M1260,1350h45M1265,1320 1250,1385M1335,1245 1325,1300 1338,1305M1360,1240 1355,1345 1338,1350 1338,1380M1452,1290 1450,1365M1452,1330 1512,1332M1490,1165h40M1492,1165 1488,1285M1515,1165 1512,1365M1535,1215H1568M1528,1165V1365M1541,1215V1365M1552,1215V1365M1563,1215V1365M1540,1065 1500,1070 1490,1090 1490,1165M1540,1140h28M1540,990H1568M1440,1515 1465,1568M1490,1390 1492,1465M1515,1385 1535,1465 1568,1475M1190,1390 1205,1400 1185,1460M1248,1385V1440M1205,1420H1248M1355,1380V1410M1395,1380V1400M1215,1465 1230,1510 1245,1535 1225,1568M1245,1535 1265,1530 1280,1568M1095,1465 1170,1445V1465M1540,1100 1540,1065',
    mid: 'M605,645 640,642 680,633 710,642 740,665 795,685M72,838 90,900 115,960 125,985 155,1020 200,1055 250,1088M110,850 130,880 160,885 175,870 182,840M185,990 190,800 200,755 235,748 270,790 310,815 335,810 360,765 380,757 400,775 425,810 465,812 540,780M380,770 400,830 415,880M415,880 415,1000 405,1120 390,1175M300,1300 240,1380 185,1465M390,1255 420,1260 460,1305 500,1285M1120,830 1140,828 1200,800 1325,808M1140,870 1215,975 1230,1010 1230,1120 1220,1185M1385,600 1440,655M1460,680 1445,770 1430,820 1450,828 1500,890 1535,935 1540,990 1535,1140M1440,775 1568,782M1440,1287 1568,1295',
    major: 'M540,780 670,690 790,688M1050,750 1085,690 1110,660 1140,665 1160,690 1190,695 1210,665 1230,620 1275,598 1320,622 1360,632 1400,625 1450,675 1500,695 1568,700M1120,1391 1190,1390 1250,1385 1400,1372 1568,1358M1150,1480 1200,1465 1300,1435 1440,1395 1568,1365M1310,700 1325,790 1318,900 1320,1060 1308,1200 1305,1568M72,838 110,870 140,905 190,912M1125,680V650M115,975 170,965',
    trunk: 'M120,890 150,905 190,912 260,925 320,945 380,960 420,975M1355,1568 1490,1470 1568,1395M415,1210 380,1235 300,1300M415,940V1025',
    huge: 'M265,1110 330,1150 420,1205M400,1215 330,1275',
    meshes: [],
  },
  {
    x: 952, y: -15,
    minor: 'M940,75 940,140 930,180 930,225 918,235 905,215 905,195 880,165 882,130 872,110 872,80 850,65 825,62 815,95 800,92 775,115 725,115 655,140 625,130 615,110 605,110 580,145 545,165 530,152 490,152 465,178 440,178 425,163 400,175 370,165 355,135 340,125 350,150 335,155 318,195 302,192 300,260 288,290 240,265 232,300 238,355 230,368 210,372 212,390 225,415 255,490 258,570M735,118 775,145 815,150 815,190 822,245 838,280 820,330 850,375 852,395 835,410 815,460 812,505 775,530 765,565 788,585 788,650 798,690 795,725 772,740 785,800 808,850 805,890 820,935 855,960 865,1000 862,1030 848,1045 845,1070M225,415 260,378 295,368 325,332 350,335 400,365 420,400 430,428 470,432 478,450 478,520M400,345 398,360M372,350 360,410 358,490 352,528 308,525 308,450 315,432 358,432M362,410 400,425 425,420M393,495 400,518 432,512 432,497M540,575 562,620 590,760 555,825 520,900 515,950M415,540 435,590 438,635M315,530 355,560M302,520V655M310,545H322V640H308zM135,575 135,540 120,535 70,553 25,555 18,530 40,525M42,590 45,640 65,660 95,660 120,675 155,655 255,648M235,580 232,618 190,620 187,650M255,580 255,670 245,690 247,735M255,605H300M255,627H300M262,680 268,705 292,705 292,675M412,705 395,750 393,775M65,665 60,690M80,665 95,700M330,680 330,740 348,740 350,715 330,700M330,780 360,775M470,790 470,840 485,875 520,870 530,840M490,955 510,925 545,970 515,1005zM515,1010 540,1060 555,1020 575,1070 550,1090 535,1060M160,740 155,800 190,850M160,780 185,758 245,760M250,780 225,790 180,890 150,950 135,1050 120,1090 150,1160 175,1190 175,1290M90,720 85,860 110,930 150,950M110,930 75,980 35,990M55,785 55,880 15,915M0,870h55M55,885 65,905 50,920M180,890 300,1010 310,1035M205,915 187,960 187,1015 205,1020 215,1100M183,1055V1145M35,1140 80,1140 120,1100M0,1070H35M240,975 300,1030 265,1080 230,1040zM265,1010 280,1050 250,1040zM215,1040 270,1130M320,880 285,955 320,990 370,960M345,870 295,990M320,880 400,980 410,1020M345,870 395,920H425M395,890 393,970M315,940 335,1030M345,970 360,1020 370,1090M290,1100 380,1060M300,1080 360,1025M310,1035 300,1080M230,1090 170,1190M30,1218 145,1222 170,1190M0,1292 150,1302M145,1360 100,1400 75,1480 50,1568M10,1390 30,1470M30,1380 40,1410M160,1225V1300M95,1500 125,1510M327,1412 345,1480M410,1275 465,1360M430,1508V1568M470,1108 465,1195H495M470,1108H490M510,1190 530,1190 585,1250M515,1280 540,1282 548,1350M655,1345 660,1405 595,1412M650,1305 630,1340M650,1305 665,1330M700,1320 690,1430M490,1395h30M490,1425h30M510,1505V1568M580,1500V1568M530,1550H580M615,1500 620,1515 650,1510M705,1085 740,1098 790,1075 805,1055 845,1080M745,1150 755,1188 705,1195 655,1212 640,1230M790,1075 808,1120M710,825 752,925 745,1000 770,1045 800,1080M770,1045 775,1030H840M705,1195 680,1215 680,1250 720,1285 740,1255 780,1262 812,1252M760,1350 770,1395 805,1430 832,1500 832,1568M800,1420 805,1385 830,1385 838,1415M700,1290 735,1325 770,1285 785,1300 780,1320 730,1375M935,1110 960,1080 1000,1050 1020,1065M920,1120 915,1180 945,1230 970,1250 1000,1230 1030,1210M970,1130 950,1200 935,1165M975,1120 990,1100 1085,1210 1085,1250 1070,1385M990,1160 1005,1195 985,1190 985,1155M1015,1130 1000,1165M1055,1250 1085,1262M1090,1090 1080,1130 1055,1170M1065,1120 1095,1150 1080,1178M1000,1350 1130,1435 1132,1505M1145,1568 1160,1530M1165,1355 1140,1350 1125,1310 1105,1310 1095,1375 1155,1412 1172,1412M875,1568 878,1530 895,1520 912,1530 918,1568M745,1545 790,1520M800,1545 830,1515M615,115 595,300 570,450 535,575 495,700 462,780M628,120 605,300 580,450 545,580 505,690 470,780M655,1485V1568M615,1568V1545H650',
    mid: 'M478,520 410,540 355,555 342,590 332,680M478,520 510,530 540,575M358,485 420,492 505,496M245,680 265,668 330,665 390,680 420,705 440,750 460,790 500,825 545,835M320,740V830M350,760 430,810 465,790M500,885 520,900 560,965 580,1065M250,760 255,840 265,870M0,780 85,782M0,825h55M0,900 30,945 35,1000 30,1165M135,1045 200,1052M510,1150 515,1290 520,1440 530,1568M485,1390V1568M520,1360 660,1340M590,1272 650,1265M585,1250 590,1400 600,1500 605,1568M735,1400 745,1568M665,1440 670,1568M490,1505 650,1485M845,1070 870,1085 950,1075 1040,1075 1120,1058 1118,1140 1125,1160 1110,1210 1112,1255 1160,1330 1175,1400 1175,1490 1215,1568M1000,1350 995,1385 1045,1515 1045,1568M1045,1515 1150,1510 1180,1568M125,1370 95,1490M100,1370 0,1460M700,1195 720,1300M115,1085 125,1100M430,1500 460,1470M505,1160H570M300,1505 250,1530 230,1568',
    major: 'M0,610 20,595 75,582 150,578 300,578M530,590 495,700 466,780M150,1520 180,1500 300,1505 430,1508M300,1505 350,1480 430,1420 470,1360 495,1290 495,1050M430,1508 460,1470 530,1455 660,1440 720,1418M580,1070 600,1065 655,1052 680,1070 700,1110 735,1148 760,1145 870,1110 930,1112 980,1135 1030,1190 1050,1230 1052,1270 1010,1345M0,1370 75,1350 150,1340M215,1020 225,980 250,910 275,860 310,840M440,1520 470,1568M95,1500 150,1530 190,1568M340,125 350,140M290,1185 300,1160 380,1105 410,1050 440,1025',
    trunk: 'M0,697 80,697 100,718 135,735 280,735 330,738 360,765 440,830 480,870 500,885M310,840 350,845 440,910 470,945 485,990 495,1050M265,1140 275,1110 310,1060 400,1030 440,1015 490,1025M740,1400 785,1490 825,1568M60,1390 150,1350M130,1530 150,1520',
    huge: 'M265,1145 205,1250 140,1350M460,800 460,900 475,960 500,1040 540,1110 600,1180 700,1300 740,1400',
    meshes: [[38, 1220, 145, 1222, 130, 1350, 24, 1350, 7, 0], [8, 1165, 24, 1165, 20, 1360, 4, 1360, 1, 0]],
  },
  {
    x: -8, y: 555,
    minor: 'M68,105 88,75M35,142 38,185M718,1030 730,980 775,890M735,1045 795,990 805,940M1150,190 1165,195M1205,310 1185,345M1180,190 1205,310M1165,195 1190,320M1220,0 1240,40 1225,65 1230,115M1240,40 1265,40 1280,75 1265,125 1215,155 1200,145 1185,185M1305,165 1400,105 1395,88 1310,135M1355,95 1370,120M1340,160 1355,200 1375,220 1340,325M1375,220 1400,200 1440,200 1470,228 1490,195 1440,25M1400,205 1425,320 1440,400 1458,440 1450,460 1400,475M1205,205H1235L1215,230M1250,240 1285,195 1305,240 1295,262 1270,235M1250,240 1255,275M1185,345 1240,520 1255,550M1205,315 1232,415 1232,340 1265,365 1245,510M1395,325 1375,365M1250,585 1210,580 1185,575 1150,620 1150,645M1290,460 1290,400 1320,378 1345,420 1320,470M1290,460 1335,485 1345,520 1345,580 1335,605 1290,525 1290,460M1335,605 1360,655 1390,678 1405,660 1408,580 1420,560M1330,365 1360,385 1375,440 1345,420M1165,815 1172,900 1172,955 1135,960M1130,900H1170M860,755 880,750 880,730 865,725 885,690M915,690 900,660 880,660 870,690M945,550 945,575 930,600 950,670M975,555 977,590M965,705 1015,715M960,720 1012,735M960,735 1010,755M955,752 1005,775M960,710V750M1035,895h25M1130,720 1150,750V810M1120,770h30M1120,800h30M1040,1080 1070,1320M1062,1245 1135,1232M1100,1275 1175,1268 1172,1300M1108,1165 1100,1300M1122,1165 1115,1300M1135,1055 1210,1035M1140,1210 1250,1198 1300,1130 1345,1080M1165,1050 1180,1150 1200,1200M1190,1065 1230,1050M1215,1085 1235,1080M1145,1180h15L1175,1155M1170,1215h30V1165h30M1265,1060 1255,1095M1250,1160 1268,1145 1280,1160M1210,1010 1220,1030 1245,1055 1270,1060 1305,1015 1290,970 1345,1075M1200,935 1225,980 1250,1000M1225,975h25M1380,895H1450M1420,895V990M1520,1035 1525,1075M1400,890 1405,860M1470,900 1490,990 1465,1000M1515,175V400H1535M1515,175h10M1525,215V390M1515,290H1540M1430,690 1430,640 1490,540 1525,400M1490,560 1520,590M1500,520 1535,560M1555,720H1568M1545,540V720L1530,765M875,350 880,390 915,515 980,490 972,420 960,340M910,275 940,540M1015,490 1050,485M1100,465 1140,450M848,520 860,600 855,700M870,610 900,650M870,660V610M1135,850V935M1155,1180V1210M1440,820 1400,780',
    mid: 'M725,1035 810,860M735,1035 800,950 830,850M1005,425 1165,380M1200,185 1225,270 1255,290 1320,320 1370,350 1385,400 1400,520 1470,620M1255,550 1240,600 1245,660 1268,795M1480,152H1540M1490,195H1540M1310,825 1325,710M950,690 945,790 985,880 1010,870M950,680 1010,685 1020,665M1010,690 1000,800 1030,900 1028,1000 1045,1090M1135,930 1128,1060 1140,1300M1055,1165 1150,1158 1230,1130M1135,1095 1240,1055M1140,1130 1235,1095M1330,975 1360,985 1440,985M1470,630 1568,765M1430,690 1568,870M1500,605 1568,608M1320,720 1400,710M1345,730 1370,800',
    major: 'M612,1237 725,1040M815,300 865,440 905,540 950,550 1000,540 1120,500 1190,345 1230,240 1270,160M1105,217 1190,185 1250,165 1290,140M1295,0 1295,130M1295,140 1325,200 1322,260 1310,290 1300,350 1275,380 1268,470 1255,550 1310,680 1340,720 1385,840 1425,860M1310,830 1350,800 1380,770M1310,830 1300,900 1270,950 1245,1060 1220,1280M1190,770 1160,815 1100,845 1010,815 920,790 860,755M940,965 1030,945 1130,935 1240,925 1270,945 1330,975M1030,1000 1055,1100 1100,1310M1070,1318 1180,1305 1230,1275 1300,1180 1360,1110M1057,1350 1070,1318M1360,1110 1395,1440M1355,980 1360,1110M1385,840 1380,900 1350,980M1365,1108 1410,1095 1455,1060 1500,1030 1530,1025 1568,1000M1340,720 1410,710 1470,630 1500,530 1545,400 1545,0M1380,745 1540,910M1490,687H1568M1540,920 1500,1020',
    trunk: 'M800,280 845,430 840,510M837,430 830,600 845,700 830,790 805,860M865,500 900,590 918,690 918,950M985,320 990,350 1000,540 1020,665M1290,140 1400,60 1475,0M1110,640 1130,700 1190,770 1310,830M805,950 815,965 870,965 940,965M1425,855 1450,900 1455,1060M1530,920 1568,900',
    huge: 'M1455,1000V1040',
    meshes: [[1085, 240, 1150, 215, 1180, 330, 1100, 370, 3, 3], [1005, 360, 1095, 340, 1110, 640, 1035, 640, 4, 6], [1020, 660, 1110, 650, 1125, 840, 1005, 815, 5, 5], [1050, 850, 1125, 850, 1125, 930, 1050, 935, 5, 0], [1380, 750, 1440, 690, 1568, 830, 1540, 920, 4, 6]],
  },
  {
    x: 952, y: 555,
    minor: 'M8,175V398H30M8,175H18V215M22,215V360M15,290h25M45,0 30,70 50,75M65,0 45,80M85,0 60,90M60,40 130,80M50,75 120,120M115,130V190L160,230M160,250 190,300 145,380M165,340 185,365 172,405 145,380M105,370 130,400M65,500V530M60,440 95,450 80,485H45M55,465 75,470M150,700 145,780M138,615 135,660 125,690 170,725 160,790 150,860M45,730h40M0,740 50,790 150,925M0,790 75,900M100,870 155,920M130,850 115,890M0,830 140,965 170,880 95,790M35,910 65,950M45,935 25,990 28,1015M15,1040 18,1075M455,370 447,382 455,395 463,382zM520,425 690,670M665,710 680,665M665,385 680,410 710,360M675,345 670,370M430,10 425,70 450,75M495,110V165L520,185 550,175M535,60h45M550,125V92H590M545,140 560,175M680,190 710,185 730,270M680,220 690,270M670,280 675,345M575,185 615,180M570,140 575,235M720,280 860,390M740,270 830,370M830,300 920,420M770,0 805,80 835,70M830,0 835,65 850,95 870,90 880,40 895,30 910,40 925,130 990,185M750,55 785,40M805,60 830,30M805,85 790,150 810,185 808,240 835,280 820,305M800,90 770,200M1130,0V25M1068,145 1108,120 1110,92M1080,185 1100,175 1120,220 1190,290 1205,345 1270,445 1330,395M1160,45 1145,75 1195,170 1190,220 1205,250 1215,320 1255,355 1285,430M1085,280 1120,278 1135,330 1150,540 1120,590M965,270 910,220 870,215 860,240 900,335 935,350 965,320M1000,305 1035,315 1070,295 1060,330 1030,365 1005,345zM1065,345 1085,360 1110,500 1095,515 1080,490 1050,400M1080,490h28M930,380H970M930,380V415L970,420M930,400h45M990,375 1030,370 1040,390 1000,415M1000,380V410M1015,375V405M1000,420 1045,405M940,430 1040,490M950,450 960,425M1250,150 1280,150 1335,235 1305,245 1250,160M1385,250 1385,235 1395,232 1400,250M1415,370V400M1365,550 1325,535 1300,590 1297,635M1365,550 1405,700 1400,780 1375,880 1395,945 1450,985 1468,1050 1435,1165M1300,545 1295,570 1265,580 1250,610 1255,640M1345,580 1360,625 1358,740 1350,805 1310,770 1305,645M885,445 910,490 995,540 1090,680M865,470 1050,700M885,445 865,470M910,490 855,560M995,540 900,660M1060,555 980,660 955,690M1040,590 925,650M1010,630 1050,700M800,490 910,690 935,650M1120,690 1145,640M1110,710 1118,800 1080,880M1118,805 1135,845 1165,850 1168,780 1185,760M1045,830 1080,785 1105,815M1045,830 1060,860 1085,810M1115,840 1125,855M1260,1080 1250,1105M1330,1040 1350,1110M1325,930 1290,1010M1240,735 1275,790 1270,840M1380,1045 1395,1050 1415,1165 1430,1175 1470,1165 1483,1190 1440,1285 1365,1275M1360,1220 1250,1300 1270,1360 1310,1425 1325,1405 1343,1435 1375,1390 1365,1330 1370,1260M1365,1250 1350,1285 1400,1290V1330L1370,1345M1285,1320 1340,1280M1285,1320 1290,1340 1320,1385 1345,1350 1325,1310M1305,1310V1340L1355,1415M1270,1290 1275,1320 1265,1335M1300,1105 1360,1220 1370,1260M950,685V705H960V685z',
    mid: 'M0,152H40M0,195H40M130,90 50,340M110,430 90,530M45,380 115,435 140,460 138,490 115,530M85,610V685M195,190 215,212M205,185 228,210M35,765 165,790M500,445 580,320 640,410 630,430M665,385 640,410M480,0 485,100M510,20 515,100M530,10 535,140M580,10 585,125M600,10 610,290M490,108 530,105M485,15 660,0M815,80 795,160M1030,0 1045,40 1045,90 1015,120 990,185 970,270 970,310 990,450M1180,0 1250,150 1350,260M1045,90 1090,220 1085,280 1045,400 1065,540M1300,265 1305,300 1330,390 1350,395 1400,380 1415,415M1415,420 1435,450 1435,485 1365,550M1255,640 1360,645M1310,698H1360M1255,650 1290,740 1300,860M845,430 1025,740M820,470 1005,780M1090,680 1005,780M1010,800 1080,920 1080,970 1130,1095 1155,1125M1155,1125 1250,1110 1300,1105M1260,1080 1330,1045 1330,990 1340,960M850,540 905,670M115,540 112,690M40,535 130,540 135,610M710,105 715,105M1370,1400 1382,1418',
    major: 'M90,30 50,90 40,200 40,700 20,760M100,0 120,30 220,100M150,20 100,170 45,380M230,100 200,180 110,430M0,610H135M112,690 100,770 35,910M465,395 665,705M665,0 680,230M740,0 760,250M535,135 660,110 710,105M580,235 750,210M610,290 750,262M690,270 740,350 820,470M1045,30 1130,25 1160,35 1210,130 1300,265M1300,265 1360,265 1450,235 1475,180 1500,152M1290,870 1300,950 1280,1010 1155,1125 932,1318M1290,870 1340,970 1380,1060 1422,1280M40,930 70,960 65,1000 20,1035 0,1030M720,365 810,490 870,590 930,760 960,805M230,100 245,50 290,20 330,0',
    trunk: 'M160,15 430,18M0,687H125M0,860 35,915 0,1000M430,20 480,110 530,180 600,300M640,325 690,330 720,365M1475,325 1415,415 1370,475 1300,535 1215,580 1190,610 1170,660M1015,795 1080,715 1175,670M940,780 960,805 1000,805 1015,795M1170,660 1210,700 1290,870M750,210 790,330 850,395',
    huge: 'M600,300 640,328M850,395 940,450 1060,530 1170,650M150,110 190,160M130,100 195,170M1270,840 1290,860',
    meshes: [[55, 100, 110, 130, 90, 280, 45, 240, 1, 3], [50, 260, 160, 250, 105, 430, 45, 400, 4, 3], [620, 20, 655, 10, 660, 110, 620, 120, 1, 4], [625, 150, 655, 145, 660, 220, 625, 225, 3, 1], [730, 280, 770, 280, 850, 390, 815, 440, 2, 5]],
  },
];

const INNER_CITY = {
  minor: 'M1035,35 1050,10 1100,10 1220,72M1165,65 1180,52M945,95V60M1035,120H1000L988,125 990,170 1010,200M1235,155 1250,135 1300,135 1355,122 1375,140M1075,170 1090,195 1150,215 1215,225 1250,245 1255,270 1240,360 1190,425M1245,330 1140,303 1030,298 1030,320 1038,348 1110,372 1310,525M1175,300V312M1110,375 1095,395 1055,405 975,490M1100,410 1120,390 1160,430 1140,455zM1030,440 1110,490 1200,570 1305,572M1140,460 1220,515 1228,570M1275,490 1335,370 1425,370 1425,410M1400,430 1355,490 1335,530 1310,535 1305,600 1335,650 1335,685H1390M1305,572 1345,580 1385,620 1395,680 1395,810M1310,600 1345,603 1348,630M1408,428 1420,416 1435,428 1420,442zM1440,550 1415,560 1412,590 1440,605M1440,650 1425,640 1420,740 1440,745M1400,790H1440M1160,540 1060,650M1080,580 1145,615 1150,640M1110,665 1120,655 1135,662 1130,680 1115,682zM745,140 680,215M690,110 635,180M880,245 825,305M700,105 745,140 835,205 880,240M705,120 690,105 655,130M440,305 515,375M400,345 490,420M550,355 465,440 400,520 310,620M330,465 390,408M380,510 432,455 425,440M420,437 460,460M430,475 395,510M350,515 325,545 380,560M345,560 445,640M325,540 300,552 250,530M105,480 130,468 260,462 275,475M205,470V490M175,555 140,595 95,585M490,660 595,740 585,780 605,800M655,775 740,850M15,228 270,145M28,252 290,165M30,275 360,175M75,220 105,300M140,190 155,235M210,175 250,270M270,145 290,190M365,150 370,175 360,215M415,135 420,155M50,350 300,280 310,305 120,385M60,368 300,295M110,355 120,385M175,295 195,360M250,270 280,345M120,368 240,335M540,50 600,40 705,38 708,55 660,75 600,75 560,80zM680,70 695,90 660,125M625,100 660,88 680,105M560,970 525,1005 525,1040 580,1120 610,1135M615,1140H650L710,1260V1280M785,945H870M835,945V990M855,945V990M800,995H880M800,995V1170M840,1015H880M800,1045H880M785,1065H880M800,1110H880M800,1155H880M850,1060V1085M845,1190V1250M865,1190V1250M880,870H950L985,900 1010,975M885,905H945L975,940 980,980M890,1010 950,1060M915,1090 905,1140M935,1095 925,1140M965,1060 950,1130M995,1100 990,1150M1020,1110V1150M950,1140 930,1190M985,1150 970,1230M1000,890 1020,990M1025,890 1050,980M1000,1235 1060,1245 1085,1280M930,1440 890,1350 900,1330 960,1300 1035,1290 1060,1310 1090,1440M930,1245 960,1290M1280,835 1300,930M1305,835 1320,900M1330,945 1350,1030M1290,1170 1325,1390M1365,1160 1390,1365M1415,1160 1425,1210M1300,940 1340,1170M1385,1030 1420,1150M1200,885 1290,870M1250,1130 1350,1110M1300,1235 1440,1210M1320,1325 1440,1305M1110,985 1220,1030M1400,1165V1210M1160,765 1185,762 1215,825M1165,770 1190,825M1320,908 1440,880M1385,895V915M685,300 645,335 700,385M635,695 670,655 730,705M1050,1160 1060,1220',
  mid: 'M1090,150 1200,160 1320,180 1440,155M1375,140 1390,190 1440,245M520,90 585,150 765,285M515,92 365,145 290,170M370,380 460,455 560,530 740,665 800,720M40,400 80,470 180,550 210,570 310,620 415,705 500,780 575,850 690,930 745,985 770,1040 775,1170M310,450 370,380 455,280 520,215 585,150M280,470 240,530 205,580 190,640M880,110 875,160 895,175 940,178M690,930 725,905 880,905M1060,1030 1230,1000M1075,1075 1385,1030M1090,1140 1350,1090M1120,1310 1440,1250M1130,1355 1280,1330M890,1085 1060,1110M890,1135 985,1150 1080,1145M960,1220 965,1290 1000,1440M710,1100 780,1210 830,1290 880,1440M745,1000 700,1060M650,1090 610,1150 620,1290 630,1310M500,900 490,930M1140,540 1190,425 1110,510 1050,580M1125,700 1160,770 1180,830M35,400 120,405 240,370 280,350 320,350 370,380M785,1085H880',
  major: 'M0,110 15,145 45,155 110,152 270,105 490,12M945,190 940,225 890,280 885,310 925,430 965,490 1060,610M850,105 900,120 930,150 950,185M1035,60 1045,130 1055,175M830,210 780,270 690,370 640,425 560,530 490,610 415,700 375,750M920,465 835,565 740,660 660,745 575,840 540,885M1110,510 1050,580 970,660 860,790 840,830M35,330 180,280 360,220 395,225 455,280 640,415 835,565 970,670M250,365 290,400 310,460 390,530 490,605 660,745M35,400 120,405 240,370M830,840 1170,832 1440,812M965,840 1120,975M1000,990 1060,980 1220,945 1440,900M1100,1220 1210,1195 1440,1160M1140,1420 1440,1370M880,840V1180M785,1185H880M890,1175 930,1210 960,1222 1100,1220M850,1275 930,1245M1190,95 1310,0M15,420V590',
  trunk: 'M490,10 600,8 740,8 775,40 790,65 850,95M850,98 920,92 960,60 1030,50 1100,50 1160,80 1220,75 1330,0M950,190 1010,202 1050,195 1075,165 1095,145 1130,135 1200,95M0,200 15,240 20,340 30,385 15,420M620,1290 780,1290 850,1272M830,840 870,890M660,745 830,868M1050,980 1070,1090 1095,1220 1110,1300 1120,1440M0,665 70,705 120,710 165,680M690,1080 780,1250 845,1440M1060,1010 1075,1120',
  huge: 'M0,615 100,630 200,670 370,760 500,860 540,890 600,980 690,1090M690,1060 770,1220 800,1310',
  meshes: [
    [375, 168, 505, 100, 570, 165, 425, 238, 5, 1], [400, 155, 520, 95, 585, 150, 470, 200, 3, 3],
    [525, 212, 590, 150, 770, 285, 695, 365, 3, 5], [695, 375, 790, 275, 910, 395, 805, 460, 4, 4],
    [770, 468, 860, 372, 1065, 570, 970, 655, 5, 6], [925, 470, 985, 490, 1100, 590, 1065, 600, 1, 4],
    [1070, 590, 960, 690, 1080, 825, 1180, 815, 4, 5], [960, 690, 860, 800, 900, 830, 1080, 825, 3, 4],
    [660, 745, 800, 610, 935, 705, 840, 830, 6, 4], [640, 695, 670, 658, 740, 710, 700, 765, 1, 2],
    [890, 1010, 900, 915, 1060, 1055, 1060, 1140, 3, 6], [970, 880, 1080, 835, 1175, 940, 1110, 985, 4, 5],
    [1155, 840, 1250, 835, 1310, 1440, 1195, 1440, 4, 0], [1120, 1310, 1200, 1300, 1205, 1350, 1130, 1360, 3, 0],
  ],
};

const Roads = styled.path`
  fill: none;
  stroke: #4bd257;
  stroke-linecap: round;
  stroke-linejoin: round;
  vector-effect: non-scaling-stroke;
  stroke-width: ${(p) => p.$w}px;
`;

const RoadSheet = ({ sheet }) => (
  <>
    <Roads d={sheet.minor} $w={5.2} />
    <Roads d={sheet.meshes.map(mesh).join('')} $w={4.4} />
    <Roads d={sheet.mid} $w={6.2} />
    <Roads d={sheet.major} $w={8} />
    <Roads d={sheet.trunk} $w={10.5} />
    <Roads d={sheet.huge} $w={17} />
  </>
);

const RasterMap = () => (
  <svg width="1921" height="1137" viewBox="0 0 1921 1137" shapeRendering="crispEdges">
    <rect width="1921" height="1137" fill="#503cdc" />
    {TILES.map((t, i) => (
      <g key={i} transform={`translate(${t.x} ${t.y}) scale(0.63776 0.38265)`}>
        <RoadSheet sheet={t} />
        {i === 3 && <path d="M125 85L210 140 195 190 115 125z" fill="#4bd257" />}
      </g>
    ))}
    <svg x="252" y="245" width="480" height="480" viewBox="0 0 1440 1440">
      <rect width="1440" height="1440" fill="#503cdc" />
      <RoadSheet sheet={INNER_CITY} />
    </svg>
  </svg>
);

/* ------------------------------------------------------------------- data */

const MENUS = [['F', 'ile', 53], ['E', 'dit', 56], ['V', 'iew', 67], ['B', 'ookmarks', 132], ['I', 'nsert', 76], ['S', 'election', 114], ['G', 'eoprocessing', 173], ['C', 'ustomize', 128], ['W', 'indows', 113], ['H', 'elp', 60]];

const LAYERS = [
  { name: 'KowloonInteractions', sym: 'dot', c: '#7d0a1e' },
  { name: 'HKAccidents', sym: 'dot', c: '#8c0a1e' },
  { name: 'SamplingPoints', sym: 'dot', c: '#15489c' },
  { name: 'KECenterline', on: true, sym: 'line', c: '#14148c' },
  { name: 'KowloonEdges', sym: 'line', c: '#12a066' },
  { name: 'KEBDissolve', sym: 'patch', c: '#fcd7c5' },
  { name: 'KowloonEdgesBuffer15', sym: 'patch', c: '#b4aef4' },
];

const CATALOG = [
  [0, '-', 'home', 'Home - StreetViewImageryForRoadTrafficCras'],
  [1, '+', 'folder', '.ipynb_checkpoints'], [1, '+', 'folder', 'cache'], [1, '+', 'folder', 'Data'], [1, '-', 'folder', 'shps'],
  [2, '+', 'folder', 'Accidents'], [2, '+', 'folder', 'HongKongDistrict'], [2, '+', 'folder', 'HongKongRoads'],
  [2, '+', 'folder', 'HongKongRoadsSimplify'], [2, '+', 'folder', 'KowloonCityDistrict'], [2, '+', 'folder', 'KowloonDistrict'],
  [2, '+', 'folder', 'KwunTongDistrict'], [2, '-', 'folder', 'RoadSampling'], [3, '-', 'folder', 'Temp'],
  [4, '-', 'gdb', 'raster.gdb', 'hot'], [5, '+', 'raster', 'dissolve2raster'], [5, '+', 'raster', 'reclassify'],
  [4, '', 'poly', 'KEBDissolve.shp'], [4, '', 'poly', 'KowloonEdgesBuffer15.shp'], [3, '', 'point', 'ConstructionPoints.shp'],
  [3, '', 'line', 'KowloonEdges.shp'], [3, '', 'line', 'KowloonEdgesOneItem.shp'], [3, '', 'point', 'KowloonInteractions.shp'],
  [3, '', 'point', 'SamplingPoints.shp'], [2, '+', 'folder', 'ShamShuiPoDistrict'], [2, '+', 'folder', 'WongTaiSinDistrict'],
  [2, '+', 'folder', 'YauTsimMongDistrict'], [2, '', 'txt', 'NameCh.txt'], [1, '', 'mxd', 'HK0405.mxd', 'bold'],
  [0, '-', 'fconn', 'Folder Connections'], [1, '+', 'flink', 'C:\\Users\\Only\\Downloads'], [1, '+', 'flink', 'D:\\Collections\\Dataset'],
  [1, '+', 'flink', 'D:\\Workspace'], [1, '+', 'flink', 'D:\\Workspace\\GraphEmbedding'], [1, '+', 'flink', 'D:\\Workspace\\SentenceEmbedding&NLRS'],
  [1, '+', 'flink', 'D:\\Workspace\\TrajEmbedding'], [1, '+', 'flink', 'D:\\Workspace\\Word2Vec\\shenzhen'],
  [1, '+', 'flink', 'E:\\Collections\\DataCollections\\', '', '课程奖励：北'], [1, '+', 'flink', 'E:\\DataCollections'],
  [0, '-', 'ftool', 'Toolboxes'], [1, '+', 'ftool', 'My Toolboxes'], [1, '-', 'ftool', 'System Toolboxes'],
  [2, '+', 'tbx', '3D Analyst Tools.tbx'], [2, '+', 'tbx', 'Analysis Tools.tbx'], [2, '+', 'tbx', 'Cartography Tools.tbx'],
  [2, '-', 'tbx', 'Conversion Tools.tbx'], [3, '+', 'toolset', 'Excel'], [3, '+', 'toolset', 'From GPS'], [3, '+', 'toolset', 'From KML'],
  [3, '+', 'toolset', 'From PDF'], [3, '+', 'toolset', 'From Raster'], [3, '+', 'toolset', 'From WFS'], [3, '+', 'toolset', 'JSON'],
];

/* ------------------------------------------------------------- components */

// Space-separated icon names; "|" draws a separator.
const Icons = ({ list }) => list.split(' ').map((n, i) => (n === '|' ? <Sep key={i} /> : <IconCell key={i}><Icon name={n} /></IconCell>));

const More = ({ gap }) => <Overflow $gap={gap}><OverflowBar /><Caret $s={4} /></Overflow>;

const Toolbars = () => (
  <ToolbarArea>
    <ToolbarRow $h={43} $left={4}>
      <Toolbar $h={42} $after={3}>
        <Grip /><Icons list="new open save print | cut copy paste del | undo redo |" />
        <IconCell $w={32}><Icon name="add" /><Caret /></IconCell><Sep />
        <ScaleCombo><span>1<b>:</b>50<b>,</b>000</span><Chevron c="#333" s={1.8} /></ScaleCombo><Sep />
        <IconCell $on><Icon name="edit" /></IconCell><Icons list="| toc catalog search toolbox python | model" /><More />
      </Toolbar>
      <Toolbar $h={42}>
        <Grip /><ToolLabel $cjk $w={115} $pl={4}>切片地图<Caret /></ToolLabel><Sep />
        <ToolLabel $w={99} $pl={5}><span><u>G</u>oogle</span><Caret /></ToolLabel>
        <ToolLabel $cjk $w={94}><span>搜搜(<u>S</u>)</span><Caret /></ToolLabel>
        <ToolLabel $cjk $w={94}><span>高德(<u>A</u>)</span><Caret /></ToolLabel>
        <ToolLabel $w={64}><span><u>B</u>ing</span><Caret /></ToolLabel>
        <ToolLabel $w={186}><span><u>O</u>penStreetMap</span><Caret /></ToolLabel>
        <ToolLabel $cjk $w={85}>天地图<Caret /></ToolLabel><Sep />
        <ToolLabel $cjk $w={230} $pl={2}>在线/离线/切片地图:</ToolLabel>
        <LayerCombo>在线地图、离线地图、切片图层列表<Caret $s={8} /></LayerCombo>
        <Icons list="gline gsel | gdown | db | yzoom | city | qq users | money | refresh | about" /><More />
      </Toolbar>
    </ToolbarRow>
    <ToolbarRow $h={36} $left={4}>
      <Toolbar $h={34} $after={367}>
        <Grip /><Icons list="zin zout hand globe | fin fout | back fwd |" />
        <IconCell $w={34}><Icon name="selfeat" /><Caret /></IconCell><Icons list="clear |" />
        <IconCell $on><Icon name="arrow" /></IconCell><Icons list="| info bolt html | measure | find route xy | time | viewer" /><More gap={1} />
      </Toolbar>
      <Toolbar $h={34} $top={2}>
        <Grip /><Icons list="lzin lzout lhand lfull l11 | lfin lfout | lback lfwd" />
        <PercentCombo><PercentText>0%</PercentText><Chevron c="#999" s={1.8} /></PercentCombo><Sep />
        <IconCell $on="soft"><Icon name="ldraft" /></IconCell><Icons list="lfocus lswap lpages" /><More />
      </Toolbar>
    </ToolbarRow>
    <ToolbarRow $h={41} $left={298}>
      <Toolbar $h={40} $after={32}>
        <Grip /><ToolLabel $w={78} $pl={4}><span>Edito<u>r</u></span><Caret /></ToolLabel>
        <Icons list="| eptr eptra | eline ecurve" /><IconCell $w={33}><Icon name="etrace" /><Caret $c="#888" /></IconCell>
        <Icons list="epoint | evert eshape esplit ecut erot | etable esketch | ecreate" /><More />
      </Toolbar>
      <Toolbar $h={40}>
        <Grip /><RasterCombo><span>reclassify</span><span>⌄</span></RasterCombo><Icons list="| rtable |" />
        <ToolLabel $w={168} $spread $pl={4}><span>Vectori<u>z</u>ation</span><Caret /></ToolLabel>
        <Icons list="vtrace | vcorner vpen | vflash |" />
        <ToolLabel $w={191} $spread $pl={5}><span>Raster <u>C</u>leanup</span><Caret /></ToolLabel><Sep />
        <ToolLabel $w={175} $spread $pl={4}><span>Cell Selectio<u>n</u></span><Caret /></ToolLabel>
        <Icons list="cs1 cs2 cs3 | snap" /><More />
      </Toolbar>
    </ToolbarRow>
  </ToolbarArea>
);

const Check = ({ on }) => (
  <CheckBox>{on && <svg width="9" height="9" viewBox="0 0 9 9"><path d="M1.500 4l2.500 2.500L8 2" stroke="#000" strokeWidth="1.800" fill="none" /></svg>}</CheckBox>
);

const TableOfContents = () => (
  <TocDock>
    <DockHeader>Table Of Contents<DockButtons><Pin /><Cross /></DockButtons></DockHeader>
    <TocTools><IconCell $on><Icon name="tocorder" /></IconCell><Icons list="tocsource tocvis tocsel | options" /></TocTools>
    <TocTree>
      <TocRow><Expander /><LayersIcon><Icon name="layers" /></LayersIcon><LayerName $bold>Layers</LayerName></TocRow>
      {LAYERS.map((l) => (
        <React.Fragment key={l.name}>
          <TocRow $in={19}><Expander /><Check on={l.on} /><LayerName>{l.name}</LayerName></TocRow>
          <TocRow $in={l.sym === 'dot' ? 53 : l.sym === 'line' ? 46 : 47}>
            {l.sym === 'dot' && <DotSymbol $c={l.c} />}
            {l.sym === 'line' && <LineSymbol $c={l.c} />}
            {l.sym === 'patch' && <Patch $c={l.c} />}
          </TocRow>
        </React.Fragment>
      ))}
      <TocRow $in={19}><Expander /><Check on /><LayerName>reclassify</LayerName></TocRow>
      <TocRow $in={46}><Patch $bold $c="#503cdc" /><LayerName>0</LayerName></TocRow>
      <TocRow $in={46}><Patch $bold $c="#4bd257" /><LayerName>1</LayerName></TocRow>
      <TocRow $in={19}><Expander /><Check on /><LayerName $selected>dissolve2raster</LayerName></TocRow>
      <TocRow $in={70}><LayerName>Value</LayerName></TocRow>
      <Ramp><RampBar /><RampLabels><span>High : 890</span><span>Low : 0</span></RampLabels></Ramp>
      <RedBox />
    </TocTree>
  </TocDock>
);

const MapView = () => (
  <MapColumn>
    <MapRow>
      <MapCanvas><RasterMap /></MapCanvas>
      <VScroll $w={33} $edge>
        <ArrowSlot><Chevron dir="up" /></ArrowSlot>
        <ThumbV $h={445} $mt={837} />
        <ArrowSlot><Chevron /></ArrowSlot>
      </VScroll>
    </MapRow>
    <MapFooter>
      <ViewButton $on><Icon name="vdata" size={11} /></ViewButton>
      <ViewButton $line><Icon name="vlayout" size={11} /></ViewButton>
      <ViewButton $ml={6}><Icon name="vrefresh" size={11} /></ViewButton>
      <ViewButton><Icon name="vpause" size={11} /></ViewButton>
      <ArrowSlot><Chevron dir="left" /></ArrowSlot>
      <HTrack><ThumbH $w={604} /></HTrack>
      <ArrowSlot><Chevron dir="right" /></ArrowSlot>
      <ArrowSlot />
    </MapFooter>
  </MapColumn>
);

const Catalog = () => (
  <CatalogDock>
    <DockHeader $right>Catalog<DockButtons><Pin /><Cross /></DockButtons></DockHeader>
    <CatalogTools>
      <IconCell><Icon name="cback" /></IconCell><IconCell $w={28}><Caret $s={7} /></IconCell>
      <IconCell $w={26}><Icon name="cfwd" /></IconCell><Icons list="cup chome cdefault" />
      <Sep /><IconCell $w={30}><Icon name="cgrid" /></IconCell><IconCell $w={26}><Caret $s={7} $c="#555" /></IconCell>
      <Sep /><IconCell $w={27}><Icon name="cconnect" /></IconCell><Sep /><IconCell $w={26}><Icon name="ctree" /></IconCell><Sep />
      <IconCell $w={24}><Icon name="options" size={14} /></IconCell>
    </CatalogTools>
    <LocationRow>
      <LocationLabel>Location:</LocationLabel>
      <LocationCombo><Icon name="gdb" /><span>raster.gdb</span><Chevron s={1.800} /></LocationCombo>
    </LocationRow>
    <CatalogBox>
      <CatalogScroller>
        <CatalogTree>
          {CATALOG.map(([lv, ex, icon, name, mark, hanzi]) => (
            <CatRow key={name} $lv={lv}>
              <Expander $plus={ex === '+'} $hidden={!ex} /><Icon name={icon} />
              <CatName $bold={mark === 'bold'} $hot={mark === 'hot'}>{name}{hanzi && <Hanzi>{hanzi}</Hanzi>}</CatName>
            </CatRow>
          ))}
        </CatalogTree>
        <VScroll $w={33}>
          <ArrowSlot><Chevron dir="up" /></ArrowSlot>
          <ThumbV $h={702} $mt={2} />
          <ArrowSlot><Chevron /></ArrowSlot>
        </VScroll>
      </CatalogScroller>
      <CatalogHScroll>
        <ArrowSlot><Chevron dir="left" /></ArrowSlot>
        <ThumbH $w={179} $c="#959595" />
      </CatalogHScroll>
    </CatalogBox>
    <SideTab><TabLine /><TabLine $hot /><TabLine /></SideTab>
    <ErrorPopup>
      <ErrorTitle><span>ArcMap Drawing Errors</span><ErrorClose><Cross c="#f4f4f4" /></ErrorClose></ErrorTitle>
      <ErrorBox>
        <ErrorText>{'One or more layers failed to\ndraw:\n\nKECenterline:  General function'}</ErrorText>
        <VScroll $w={33}>
          <ArrowSlot><Chevron dir="up" /></ArrowSlot>
          <ThumbV $h={33} />
          <ArrowSlot><Chevron /></ArrowSlot>
        </VScroll>
      </ErrorBox>
    </ErrorPopup>
  </CatalogDock>
);

const TaskbarView = () => (
  <Taskbar>
    <TaskIcon $w={72}><svg width="32" height="32" viewBox="0 0 32 32" fill="#fff"><path d="M0 5l13-2v12H0zM14.500 2.800L32 0v15H14.500zM0 17h13v12L0 27zM14.500 17H32v15l-17.500-2.800z" /></svg></TaskIcon>
    <TaskIcon $w={72}><svg width="32" height="32" viewBox="0 0 32 32" fill="none" stroke="#fff" strokeWidth="2.200"><circle cx="20" cy="12" r="11" /><path d="M12 20L1 31" /></svg></TaskIcon>
    <TaskIcon $w={72}><svg width="32" height="32" viewBox="0 0 32 32" fill="none" stroke="#fff" strokeWidth="2"><path d="M1 1v5h20V1M1 10h20v12H1zM1 31v-5h20v5M29 1v5M29 18v13" /><circle cx="29" cy="12" r="2.500" fill="#fff" /></svg></TaskIcon>
    <TaskIcon $w={84}>
      <svg width="30" height="30" viewBox="0 0 30 30"><circle cx="15" cy="15" r="15" fill="#fbc92d" /><path d="M15 15L2 7.500A15 15 0 0 1 28 7.500z" fill="#dd3b2f" /><path d="M15 15L2 7.500A15 15 0 0 0 14 30z" fill="#2a9a4b" /><path d="M15 8h13" stroke="#dd3b2f" strokeWidth="4" /><circle cx="15" cy="15" r="7" fill="#fff" /><circle cx="15" cy="15" r="5.500" fill="#4285f4" /></svg>
    </TaskIcon>
    <TaskButton $w={308} $pl={16} $gap={12}>
      <svg width="20" height="28" viewBox="0 0 20 28"><path d="M1 0h15v16l3 3v8H1z" fill="#f8d671" /><path d="M0 1l9 4v23l-9-4z" fill="#fce59a" /></svg>RoadSampling
    </TaskButton>
    <TaskButton $w={320} $pl={16} $gap={4} $active><ArcMapLogo />HK0405.mxd - ArcMap</TaskButton>
    <Tray>
      <TrayCell $w={62}><svg width="28" height="14" viewBox="0 0 28 14"><path d="M2 12L14 2l12 10" stroke="#fff" strokeWidth="1.800" fill="none" /></svg></TrayCell>
      <TrayCell $w={36}><svg width="32" height="32" viewBox="0 0 32 32"><path d="M8 31C6 20 8 8 10 2l5 5h8l5-6c3 8 5 20 3 30z" fill="#d8ad77" /><path d="M0 28c4-6 8-2 9 3H1z" fill="#8c6a4a" /><circle cx="14" cy="14" r="1.500" fill="#3a2a1a" /><circle cx="25" cy="14" r="1.500" fill="#3a2a1a" /></svg></TrayCell>
      <TrayCell $w={60}><svg width="32" height="24" viewBox="0 0 32 24" fill="none" stroke="#fff" strokeWidth="2"><path d="M2 1v6h7V1M5.500 7v8M10 6h18v12H5M28 10h3v5h-3" /><path d="M13 9h12v6H12z" fill="#fff" /></svg></TrayCell>
      <TrayCell $w={42}><svg width="26" height="26" viewBox="0 0 26 26" fill="none" stroke="#fff" strokeWidth="2"><path d="M2 24C2 12 12 3 24 2" stroke="#888" /><path d="M8 24C8 16 15 9 24 9M14 24c0-5 4-9 10-9" /><circle cx="22" cy="22" r="2.500" fill="#fff" /></svg></TrayCell>
      <TrayCell $w={52}><svg width="32" height="28" viewBox="0 0 32 28" fill="none" stroke="#fff" strokeWidth="2"><path d="M1 10h5l6-7v22l-6-7H1zM17 10c2 3 2 5 0 8M22 6c4 5 4 11 0 16M26 2c6 7 6 17 0 24" /></svg></TrayCell>
      <TrayCell $w={42} $big>英</TrayCell>
      <TrayCell $w={74}><svg width="32" height="32" viewBox="0 0 32 32"><rect width="32" height="32" rx="6" fill="#2766f5" /><circle cx="16" cy="15" r="8" fill="none" stroke="#fff" strokeWidth="4" /><path d="M21 20h5v5h-5z" fill="#8be04e" /></svg></TrayCell>
      <TrayCell $w={124}>9:28 PM</TrayCell>
      <TrayCell $w={2} />
      <ShowDesktop />
    </Tray>
  </Taskbar>
);

export default function App() {
  return (
    <>
      <GlobalStyle />
      <Desktop>
        <Screen>
          <TitleBar>
            <ArcMapLogo /><TitleText>HK0405.mxd - ArcMap</TitleText>
            <WindowButtons>
              <svg width="20" height="20" viewBox="0 0 20 20"><path d="M0 10h20" stroke="#000" strokeWidth="2" /></svg>
              <svg width="20" height="20" viewBox="0 0 20 20" fill="none" stroke="#000" strokeWidth="2"><path d="M1 5h14v14H1zM5 5V1h14v14h-4" /></svg>
              <Cross w={26} s={1} />
            </WindowButtons>
          </TitleBar>
          <MenuBar>{MENUS.map(([k, rest, w]) => <MenuItem key={k} $w={w}><u>{k}</u>{rest}</MenuItem>)}</MenuBar>
          <Toolbars />
          <Body><TableOfContents /><MapView /><Catalog /></Body>
          <StatusBar>{'114°10\'33.399"E  22°19\'22.87"N'}</StatusBar>
          <TaskbarView />
        </Screen>
      </Desktop>
    </>
  );
}
